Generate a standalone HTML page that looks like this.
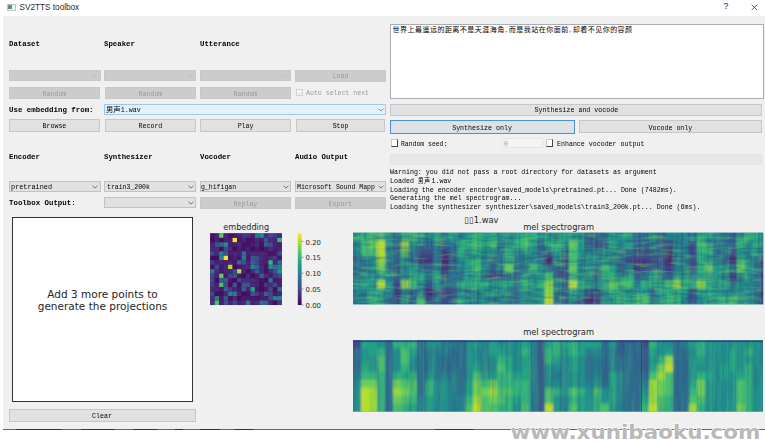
<!DOCTYPE html>
<html><head><meta charset="utf-8"><title>SV2TTS toolbox</title>
<style>
html,body{margin:0;padding:0;background:#fff;}
body{width:765px;height:442px;position:relative;overflow:hidden;font-family:"Liberation Mono","Noto Serif CJK SC",monospace;}
.abs{position:absolute;}
div{position:absolute;box-sizing:border-box;}
.t{white-space:pre;font-size:8px;line-height:10px;height:10px;}
.r{font-family:"Liberation Mono","Noto Sans CJK SC",monospace;font-weight:400;}
.b{font-family:"Liberation Mono","Noto Serif CJK SC",monospace;font-weight:700;}
.win{background:#f0f0f0;}
.btn{background:#e1e1e1;border:1px solid #c6c6c6;}
.dis{background:#cccccc;border:1px solid #c8c8c8;}
.cmb{background:#e1e1e1;border:1px solid #c2c2c2;}
.foc{background:#e1e1e1;border:1.3px solid #4b93d6;box-shadow:inset 0 0 0 1.2px #cfe3f6;}
.hov{background:#e5f1fb;border:1px solid #9ccaf0;}
.ta{background:#fff;border:1px solid #a9adb3;}
.cv{background:#fff;border:1px solid #333;}
.cb{background:#fff;border:1px solid #444;border-left-color:#c8c8c8;border-top-color:#c8c8c8;}
.cbd{background:#f7f7f7;border:1px solid #d0d0d0;}
.pb{background:#e6e6e6;}
.sd{background:#f4f4f4;border:1px solid #e5e5e5;}
.cm{display:inline-block;width:4.2px;text-align:left;padding-left:0.6px;box-sizing:border-box}
.dv{font-family:"DejaVu Sans",sans-serif;white-space:pre;}
</style></head><body>

<div class="win" style="left:3.00px;top:16.40px;width:762.00px;height:412.40px;"></div>
<div style="left:3px;top:428.8px;width:762px;height:1.1px;background:#666"></div>
<div style="left:16px;top:428.9px;width:46px;height:1.1px;background:#2c3442"></div>
<div style="left:81px;top:428.9px;width:34px;height:1.1px;background:#2e3a34"></div>
<div style="left:133px;top:428.9px;width:24px;height:1.1px;background:#43302e"></div>
<div style="left:175px;top:428.9px;width:8px;height:1.1px;background:#333"></div>
<div style="left:200px;top:428.9px;width:20px;height:1.1px;background:#333"></div>
<div style="left:235px;top:428.9px;width:18px;height:1.1px;background:#2f3a33"></div>
<div style="left:435px;top:428.9px;width:39px;height:1.1px;background:#383838"></div>
<div style="left:7px;top:3.6px;width:9.4px;height:7px;background:#eef3f1;border:0.6px solid #b8c8c2"></div>
<div style="left:7.8px;top:4.6px;width:4.4px;height:4.6px;background:#5f9080"></div>
<div class="abs" style="left:19.6px;top:1.6px;font:8.2px/11px 'Liberation Sans',sans-serif;color:#2a2a2a;white-space:pre" id="title">SV2TTS toolbox</div>
<div class="abs" style="left:723.4px;top:1.4px;font:8.8px/11px 'Liberation Sans',sans-serif;color:#222">?</div>
<svg class="abs" style="left:751.4px;top:3.6px" width="7" height="7" viewBox="0 0 7 7"><path d="M0.6 0.6 L6.2 6.2 M6.2 0.6 L0.6 6.2" stroke="#222" stroke-width="0.7" fill="none"/></svg>
<div class="t b " style="left:9.00px;top:39.20px;transform:scaleX(0.9208);transform-origin:0 50%;color:#000">Dataset</div>
<div class="t b " style="left:104.20px;top:39.20px;transform:scaleX(0.9208);transform-origin:0 50%;color:#000">Speaker</div>
<div class="t b " style="left:199.60px;top:39.20px;transform:scaleX(0.9208);transform-origin:0 50%;color:#000">Utterance</div>
<div class="dis" style="left:9.00px;top:70.00px;width:91.60px;height:10.80px;"></div>
<svg class="abs" style="left:91.80px;top:73.60px" width="6" height="4" viewBox="0 0 6 4"><path d="M0.6 0.7 L3 3.1 L5.4 0.7" fill="none" stroke="#bcbcbc" stroke-width="0.8"/></svg>
<div class="dis" style="left:104.20px;top:70.00px;width:91.80px;height:10.80px;"></div>
<svg class="abs" style="left:187.20px;top:73.60px" width="6" height="4" viewBox="0 0 6 4"><path d="M0.6 0.7 L3 3.1 L5.4 0.7" fill="none" stroke="#bcbcbc" stroke-width="0.8"/></svg>
<div class="dis" style="left:199.60px;top:70.00px;width:91.40px;height:10.80px;"></div>
<svg class="abs" style="left:282.20px;top:73.60px" width="6" height="4" viewBox="0 0 6 4"><path d="M0.6 0.7 L3 3.1 L5.4 0.7" fill="none" stroke="#bcbcbc" stroke-width="0.8"/></svg>
<div class="dis" style="left:295.20px;top:69.60px;width:90.60px;height:12.00px;"></div>
<div class="t r " style="left:330.90px;top:71.10px;transform:scaleX(0.8292);transform-origin:50% 50%;color:#9a9a9a">Load</div>
<div class="dis" style="left:9.40px;top:87.00px;width:90.80px;height:12.40px;"></div>
<div class="t r " style="left:40.40px;top:88.70px;transform:scaleX(0.8292);transform-origin:50% 50%;color:#9a9a9a">Random</div>
<div class="dis" style="left:104.60px;top:87.00px;width:91.00px;height:12.40px;"></div>
<div class="t r " style="left:135.70px;top:88.70px;transform:scaleX(0.8292);transform-origin:50% 50%;color:#9a9a9a">Random</div>
<div class="dis" style="left:200.00px;top:87.00px;width:90.60px;height:12.40px;"></div>
<div class="t r " style="left:230.90px;top:88.70px;transform:scaleX(0.8292);transform-origin:50% 50%;color:#9a9a9a">Random</div>
<div class="cbd" style="left:295.80px;top:89.00px;width:6.80px;height:7.40px;"></div>
<svg class="abs" style="left:296.6px;top:90px" width="6" height="6" viewBox="0 0 6 6"><path d="M0.8 3 L2.3 4.6 L5.2 1" stroke="#d8d8d8" stroke-width="0.9" fill="none"/></svg>
<div class="t r " style="left:306.00px;top:88.20px;transform:scaleX(0.8208);transform-origin:0 50%;color:#9a9a9a">Auto select next</div>
<div class="t b " style="left:9.00px;top:104.70px;transform:scaleX(0.9271);transform-origin:0 50%;color:#000">Use embedding from:</div>
<div class="hov" style="left:104.20px;top:104.20px;width:281.60px;height:10.60px;"></div>
<svg class="abs" style="left:378.00px;top:107.60px" width="6" height="4" viewBox="0 0 6 4"><path d="M0.6 0.7 L3 3.1 L5.4 0.7" fill="none" stroke="#5a7fa0" stroke-width="0.8"/></svg>
<div class="t r" style="left:106.4px;top:104.6px;color:#000;transform:scaleX(0.83);transform-origin:0 50%"><span style="font-size:7px;letter-spacing:0px;display:inline-block;transform:scaleX(1.26);transform-origin:0 50%;margin-right:3.8px">男声</span>1.wav</div>
<div class="btn" style="left:9.40px;top:118.70px;width:90.90px;height:12.90px;"></div>
<div class="t r " style="left:40.40px;top:120.70px;transform:scaleX(0.8292);transform-origin:50% 50%;color:#000">Browse</div>
<div class="btn" style="left:104.60px;top:118.70px;width:91.10px;height:12.90px;"></div>
<div class="t r " style="left:135.70px;top:120.70px;transform:scaleX(0.8292);transform-origin:50% 50%;color:#000">Record</div>
<div class="btn" style="left:200.00px;top:118.70px;width:90.70px;height:12.90px;"></div>
<div class="t r " style="left:235.70px;top:120.70px;transform:scaleX(0.8292);transform-origin:50% 50%;color:#000">Play</div>
<div class="btn" style="left:295.60px;top:118.70px;width:89.90px;height:12.90px;"></div>
<div class="t r " style="left:330.90px;top:120.70px;transform:scaleX(0.8292);transform-origin:50% 50%;color:#000">Stop</div>
<div class="t b " style="left:9.00px;top:152.30px;transform:scaleX(0.9208);transform-origin:0 50%;color:#000">Encoder</div>
<div class="t b " style="left:104.20px;top:152.30px;transform:scaleX(0.9208);transform-origin:0 50%;color:#000">Synthesizer</div>
<div class="t b " style="left:199.60px;top:152.30px;transform:scaleX(0.9208);transform-origin:0 50%;color:#000">Vocoder</div>
<div class="t b " style="left:295.20px;top:152.30px;transform:scaleX(0.9208);transform-origin:0 50%;color:#000">Audio Output</div>
<div class="cmb" style="left:9.00px;top:181.00px;width:91.60px;height:11.40px;"></div>
<div class="t r " style="left:10.60px;top:182.40px;transform:scaleX(0.8542);transform-origin:0 50%;color:#000">pretrained</div>
<svg class="abs" style="left:92.40px;top:185.20px" width="6" height="4" viewBox="0 0 6 4"><path d="M0.6 0.7 L3 3.1 L5.4 0.7" fill="none" stroke="#555" stroke-width="0.8"/></svg>
<div class="cmb" style="left:104.20px;top:181.00px;width:91.80px;height:11.40px;"></div>
<div class="t r " style="left:107.40px;top:182.40px;transform:scaleX(0.8125);transform-origin:0 50%;color:#000">train3_200k</div>
<svg class="abs" style="left:187.80px;top:185.20px" width="6" height="4" viewBox="0 0 6 4"><path d="M0.6 0.7 L3 3.1 L5.4 0.7" fill="none" stroke="#555" stroke-width="0.8"/></svg>
<div class="cmb" style="left:199.60px;top:181.00px;width:91.40px;height:11.40px;"></div>
<div class="t r " style="left:201.20px;top:182.40px;transform:scaleX(0.8125);transform-origin:0 50%;color:#000">g_hifigan</div>
<svg class="abs" style="left:282.80px;top:185.20px" width="6" height="4" viewBox="0 0 6 4"><path d="M0.6 0.7 L3 3.1 L5.4 0.7" fill="none" stroke="#555" stroke-width="0.8"/></svg>
<div class="cmb" style="left:295.20px;top:181.00px;width:90.60px;height:11.40px;"></div>
<div class="t r " style="left:296.80px;top:182.40px;transform:scaleX(0.8104);transform-origin:0 50%;color:#000">Microsoft Sound Mapp</div>
<svg class="abs" style="left:377.60px;top:185.20px" width="6" height="4" viewBox="0 0 6 4"><path d="M0.6 0.7 L3 3.1 L5.4 0.7" fill="none" stroke="#555" stroke-width="0.8"/></svg>
<div class="t b " style="left:9.00px;top:197.70px;transform:scaleX(0.9250);transform-origin:0 50%;color:#000">Toolbox Output:</div>
<div class="cmb" style="left:104.20px;top:197.40px;width:91.80px;height:10.60px;"></div>
<svg class="abs" style="left:187.80px;top:200.80px" width="6" height="4" viewBox="0 0 6 4"><path d="M0.6 0.7 L3 3.1 L5.4 0.7" fill="none" stroke="#555" stroke-width="0.8"/></svg>
<div class="dis" style="left:200.00px;top:197.00px;width:90.60px;height:12.00px;"></div>
<div class="t r " style="left:230.90px;top:198.50px;transform:scaleX(0.8292);transform-origin:50% 50%;color:#9a9a9a">Replay</div>
<div class="dis" style="left:295.20px;top:197.00px;width:90.60px;height:12.00px;"></div>
<div class="t r " style="left:326.10px;top:198.50px;transform:scaleX(0.8292);transform-origin:50% 50%;color:#9a9a9a">Export</div>
<div class="cv" style="left:12.00px;top:217.00px;width:180.80px;height:184.80px;"></div>
<div class="dv" style="left:12px;top:287.9px;width:181px;text-align:center;font-size:10.53px;line-height:12px;color:#262626" id="proj">Add 3 more points to
generate the projections</div>
<div class="btn" style="left:9.00px;top:409.00px;width:186.60px;height:13.00px;"></div>
<div class="t r " style="left:89.80px;top:411.20px;transform:scaleX(0.8292);transform-origin:50% 50%;color:#000">Clear</div>
<div class="ta" style="left:389.60px;top:23.60px;width:374.00px;height:75.00px;"></div>
<div class="abs" id="zh" style="left:392.6px;top:24.9px;letter-spacing:0.47px;font-family:'Liberation Serif','Noto Sans CJK SC',sans-serif;font-size:7px;line-height:10px;white-space:pre;color:#000">世界上最遥远的距离不是天涯海角<span class="cm">,</span>而是我站在你面前<span class="cm">,</span>却看不见你的容颜</div>
<div class="btn" style="left:390.00px;top:103.60px;width:372.40px;height:12.00px;"></div>
<div class="t r " style="left:525.80px;top:105.30px;transform:scaleX(0.8292);transform-origin:50% 50%;color:#000">Synthesize and vocode</div>
<div class="foc" style="left:390.00px;top:120.20px;width:184.60px;height:13.40px;"></div>
<div class="t r " style="left:446.20px;top:122.60px;transform:scaleX(0.8292);transform-origin:50% 50%;color:#000">Synthesize only</div>
<div class="btn" style="left:579.00px;top:120.40px;width:183.40px;height:13.00px;"></div>
<div class="t r " style="left:644.40px;top:122.60px;transform:scaleX(0.8292);transform-origin:50% 50%;color:#000">Vocode only</div>
<div class="cb" style="left:390.80px;top:139.30px;width:6.80px;height:8.00px;"></div>
<div class="t r " style="left:401.00px;top:139.20px;transform:scaleX(0.8042);transform-origin:0 50%;color:#000">Random seed:</div>
<div class="sd" style="left:502.00px;top:138.00px;width:41.40px;height:10.00px;"></div>
<div class="t r " style="left:504.20px;top:139.20px;transform:scaleX(0.8292);transform-origin:0 50%;color:#9a9a9a">0</div>
<div class="cb" style="left:546.00px;top:139.30px;width:7.40px;height:8.00px;"></div>
<div class="t r " style="left:556.60px;top:139.20px;transform:scaleX(0.8271);transform-origin:0 50%;color:#000">Enhance vocoder output</div>
<div class="pb" style="left:390.00px;top:153.60px;width:372.40px;height:11.00px;"></div>
<div class="t r " style="left:389.80px;top:167.20px;transform:scaleX(0.8292);transform-origin:0 50%;color:#000">Warning: you did not pass a root directory for datasets as argument</div>
<div class="t r" style="left:389.8px;top:175.70px;color:#000;transform:scaleX(0.83);transform-origin:0 50%">Loaded <span style="font-size:7px;letter-spacing:0.7px;margin-right:0.9px">男声</span>1.wav</div>
<div class="t r " style="left:389.80px;top:184.50px;transform:scaleX(0.8292);transform-origin:0 50%;color:#000">Loading the encoder encoder\saved_models\pretrained.pt... Done (7482ms).</div>
<div class="t r " style="left:389.80px;top:192.80px;transform:scaleX(0.8292);transform-origin:0 50%;color:#000">Generating the mel spectrogram...</div>
<div class="t r " style="left:389.80px;top:201.50px;transform:scaleX(0.8292);transform-origin:0 50%;color:#000">Loading the synthesizer synthesizer\saved_models\train3_200k.pt... Done (6ms).</div>
<svg class="abs" style="left:0;top:0" width="765" height="442" viewBox="0 0 765 442">
<rect x="210.2" y="233.4" width="71.6" height="71.6" fill="#450c5e"/>
<rect x="210.20" y="233.40" width="4.52" height="4.52" fill="#461465"/>
<rect x="214.67" y="233.40" width="4.52" height="4.52" fill="#482677"/>
<rect x="219.15" y="233.40" width="4.52" height="4.52" fill="#62c95f"/>
<rect x="223.62" y="233.40" width="4.52" height="4.52" fill="#482677"/>
<rect x="228.10" y="233.40" width="4.52" height="4.52" fill="#461465"/>
<rect x="232.57" y="233.40" width="4.52" height="4.52" fill="#471a6b"/>
<rect x="237.05" y="233.40" width="4.52" height="4.52" fill="#482677"/>
<rect x="241.52" y="233.40" width="4.52" height="4.52" fill="#423c82"/>
<rect x="246.00" y="233.40" width="4.52" height="4.52" fill="#423c82"/>
<rect x="250.47" y="233.40" width="4.52" height="4.52" fill="#472071"/>
<rect x="254.95" y="233.40" width="4.52" height="4.52" fill="#2a788e"/>
<rect x="259.42" y="233.40" width="4.52" height="4.52" fill="#238d8c"/>
<rect x="263.90" y="233.40" width="4.52" height="4.52" fill="#472c7a"/>
<rect x="268.38" y="233.40" width="4.52" height="4.52" fill="#3e4a89"/>
<rect x="272.85" y="233.40" width="4.52" height="4.52" fill="#423c82"/>
<rect x="277.32" y="233.40" width="4.52" height="4.52" fill="#482677"/>
<rect x="210.20" y="237.88" width="4.52" height="4.52" fill="#450d60"/>
<rect x="214.67" y="237.88" width="4.52" height="4.52" fill="#482677"/>
<rect x="219.15" y="237.88" width="4.52" height="4.52" fill="#450d60"/>
<rect x="223.62" y="237.88" width="4.52" height="4.52" fill="#472071"/>
<rect x="228.10" y="237.88" width="4.52" height="4.52" fill="#472071"/>
<rect x="232.57" y="237.88" width="4.52" height="4.52" fill="#eee526"/>
<rect x="237.05" y="237.88" width="4.52" height="4.52" fill="#471a6b"/>
<rect x="241.52" y="237.88" width="4.52" height="4.52" fill="#482677"/>
<rect x="246.00" y="237.88" width="4.52" height="4.52" fill="#461465"/>
<rect x="250.47" y="237.88" width="4.52" height="4.52" fill="#461465"/>
<rect x="254.95" y="237.88" width="4.52" height="4.52" fill="#472c7a"/>
<rect x="259.42" y="237.88" width="4.52" height="4.52" fill="#472071"/>
<rect x="263.90" y="237.88" width="4.52" height="4.52" fill="#39568b"/>
<rect x="268.38" y="237.88" width="4.52" height="4.52" fill="#462f7b"/>
<rect x="272.85" y="237.88" width="4.52" height="4.52" fill="#482677"/>
<rect x="277.32" y="237.88" width="4.52" height="4.52" fill="#35b779"/>
<rect x="210.20" y="242.35" width="4.52" height="4.52" fill="#482677"/>
<rect x="214.67" y="242.35" width="4.52" height="4.52" fill="#39568b"/>
<rect x="219.15" y="242.35" width="4.52" height="4.52" fill="#2f6d8e"/>
<rect x="223.62" y="242.35" width="4.52" height="4.52" fill="#238d8c"/>
<rect x="228.10" y="242.35" width="4.52" height="4.52" fill="#472071"/>
<rect x="232.57" y="242.35" width="4.52" height="4.52" fill="#472071"/>
<rect x="237.05" y="242.35" width="4.52" height="4.52" fill="#472c7a"/>
<rect x="241.52" y="242.35" width="4.52" height="4.52" fill="#461465"/>
<rect x="246.00" y="242.35" width="4.52" height="4.52" fill="#461465"/>
<rect x="250.47" y="242.35" width="4.52" height="4.52" fill="#472071"/>
<rect x="254.95" y="242.35" width="4.52" height="4.52" fill="#472c7a"/>
<rect x="259.42" y="242.35" width="4.52" height="4.52" fill="#461465"/>
<rect x="263.90" y="242.35" width="4.52" height="4.52" fill="#34628d"/>
<rect x="268.38" y="242.35" width="4.52" height="4.52" fill="#39568b"/>
<rect x="272.85" y="242.35" width="4.52" height="4.52" fill="#482677"/>
<rect x="277.32" y="242.35" width="4.52" height="4.52" fill="#472071"/>
<rect x="210.20" y="246.83" width="4.52" height="4.52" fill="#472c7a"/>
<rect x="214.67" y="246.83" width="4.52" height="4.52" fill="#462f7b"/>
<rect x="219.15" y="246.83" width="4.52" height="4.52" fill="#450d60"/>
<rect x="223.62" y="246.83" width="4.52" height="4.52" fill="#3e4a89"/>
<rect x="228.10" y="246.83" width="4.52" height="4.52" fill="#472c7a"/>
<rect x="232.57" y="246.83" width="4.52" height="4.52" fill="#450d60"/>
<rect x="237.05" y="246.83" width="4.52" height="4.52" fill="#472071"/>
<rect x="241.52" y="246.83" width="4.52" height="4.52" fill="#461465"/>
<rect x="246.00" y="246.83" width="4.52" height="4.52" fill="#482677"/>
<rect x="250.47" y="246.83" width="4.52" height="4.52" fill="#450d60"/>
<rect x="254.95" y="246.83" width="4.52" height="4.52" fill="#471a6b"/>
<rect x="259.42" y="246.83" width="4.52" height="4.52" fill="#450d60"/>
<rect x="263.90" y="246.83" width="4.52" height="4.52" fill="#471a6b"/>
<rect x="268.38" y="246.83" width="4.52" height="4.52" fill="#462f7b"/>
<rect x="272.85" y="246.83" width="4.52" height="4.52" fill="#472071"/>
<rect x="277.32" y="246.83" width="4.52" height="4.52" fill="#482677"/>
<rect x="210.20" y="251.30" width="4.52" height="4.52" fill="#3e4a89"/>
<rect x="214.67" y="251.30" width="4.52" height="4.52" fill="#472c7a"/>
<rect x="219.15" y="251.30" width="4.52" height="4.52" fill="#26828e"/>
<rect x="223.62" y="251.30" width="4.52" height="4.52" fill="#39568b"/>
<rect x="228.10" y="251.30" width="4.52" height="4.52" fill="#472071"/>
<rect x="232.57" y="251.30" width="4.52" height="4.52" fill="#472c7a"/>
<rect x="237.05" y="251.30" width="4.52" height="4.52" fill="#472071"/>
<rect x="241.52" y="251.30" width="4.52" height="4.52" fill="#2f6d8e"/>
<rect x="246.00" y="251.30" width="4.52" height="4.52" fill="#472071"/>
<rect x="250.47" y="251.30" width="4.52" height="4.52" fill="#472c7a"/>
<rect x="254.95" y="251.30" width="4.52" height="4.52" fill="#482677"/>
<rect x="259.42" y="251.30" width="4.52" height="4.52" fill="#462f7b"/>
<rect x="263.90" y="251.30" width="4.52" height="4.52" fill="#472071"/>
<rect x="268.38" y="251.30" width="4.52" height="4.52" fill="#461465"/>
<rect x="272.85" y="251.30" width="4.52" height="4.52" fill="#471a6b"/>
<rect x="277.32" y="251.30" width="4.52" height="4.52" fill="#3e4a89"/>
<rect x="210.20" y="255.78" width="4.52" height="4.52" fill="#450d60"/>
<rect x="214.67" y="255.78" width="4.52" height="4.52" fill="#450d60"/>
<rect x="219.15" y="255.78" width="4.52" height="4.52" fill="#26828e"/>
<rect x="223.62" y="255.78" width="4.52" height="4.52" fill="#eee526"/>
<rect x="228.10" y="255.78" width="4.52" height="4.52" fill="#461465"/>
<rect x="232.57" y="255.78" width="4.52" height="4.52" fill="#472071"/>
<rect x="237.05" y="255.78" width="4.52" height="4.52" fill="#461465"/>
<rect x="241.52" y="255.78" width="4.52" height="4.52" fill="#2a788e"/>
<rect x="246.00" y="255.78" width="4.52" height="4.52" fill="#471a6b"/>
<rect x="250.47" y="255.78" width="4.52" height="4.52" fill="#39568b"/>
<rect x="254.95" y="255.78" width="4.52" height="4.52" fill="#3e4a89"/>
<rect x="259.42" y="255.78" width="4.52" height="4.52" fill="#472c7a"/>
<rect x="263.90" y="255.78" width="4.52" height="4.52" fill="#472071"/>
<rect x="268.38" y="255.78" width="4.52" height="4.52" fill="#472c7a"/>
<rect x="272.85" y="255.78" width="4.52" height="4.52" fill="#423c82"/>
<rect x="277.32" y="255.78" width="4.52" height="4.52" fill="#471a6b"/>
<rect x="210.20" y="260.25" width="4.52" height="4.52" fill="#423c82"/>
<rect x="214.67" y="260.25" width="4.52" height="4.52" fill="#472071"/>
<rect x="219.15" y="260.25" width="4.52" height="4.52" fill="#482677"/>
<rect x="223.62" y="260.25" width="4.52" height="4.52" fill="#472071"/>
<rect x="228.10" y="260.25" width="4.52" height="4.52" fill="#482677"/>
<rect x="232.57" y="260.25" width="4.52" height="4.52" fill="#471a6b"/>
<rect x="237.05" y="260.25" width="4.52" height="4.52" fill="#2f6d8e"/>
<rect x="241.52" y="260.25" width="4.52" height="4.52" fill="#39568b"/>
<rect x="246.00" y="260.25" width="4.52" height="4.52" fill="#482677"/>
<rect x="250.47" y="260.25" width="4.52" height="4.52" fill="#34628d"/>
<rect x="254.95" y="260.25" width="4.52" height="4.52" fill="#3e4a89"/>
<rect x="259.42" y="260.25" width="4.52" height="4.52" fill="#482677"/>
<rect x="263.90" y="260.25" width="4.52" height="4.52" fill="#472071"/>
<rect x="268.38" y="260.25" width="4.52" height="4.52" fill="#35b779"/>
<rect x="272.85" y="260.25" width="4.52" height="4.52" fill="#482677"/>
<rect x="277.32" y="260.25" width="4.52" height="4.52" fill="#2f6d8e"/>
<rect x="210.20" y="264.73" width="4.52" height="4.52" fill="#461465"/>
<rect x="214.67" y="264.73" width="4.52" height="4.52" fill="#3e4a89"/>
<rect x="219.15" y="264.73" width="4.52" height="4.52" fill="#471a6b"/>
<rect x="223.62" y="264.73" width="4.52" height="4.52" fill="#472c7a"/>
<rect x="228.10" y="264.73" width="4.52" height="4.52" fill="#b4de2c"/>
<rect x="232.57" y="264.73" width="4.52" height="4.52" fill="#450d60"/>
<rect x="237.05" y="264.73" width="4.52" height="4.52" fill="#471a6b"/>
<rect x="241.52" y="264.73" width="4.52" height="4.52" fill="#482677"/>
<rect x="246.00" y="264.73" width="4.52" height="4.52" fill="#472c7a"/>
<rect x="250.47" y="264.73" width="4.52" height="4.52" fill="#26828e"/>
<rect x="254.95" y="264.73" width="4.52" height="4.52" fill="#34628d"/>
<rect x="259.42" y="264.73" width="4.52" height="4.52" fill="#472c7a"/>
<rect x="263.90" y="264.73" width="4.52" height="4.52" fill="#461465"/>
<rect x="268.38" y="264.73" width="4.52" height="4.52" fill="#238d8c"/>
<rect x="272.85" y="264.73" width="4.52" height="4.52" fill="#2a788e"/>
<rect x="277.32" y="264.73" width="4.52" height="4.52" fill="#26828e"/>
<rect x="210.20" y="269.20" width="4.52" height="4.52" fill="#2a788e"/>
<rect x="214.67" y="269.20" width="4.52" height="4.52" fill="#472c7a"/>
<rect x="219.15" y="269.20" width="4.52" height="4.52" fill="#471a6b"/>
<rect x="223.62" y="269.20" width="4.52" height="4.52" fill="#482677"/>
<rect x="228.10" y="269.20" width="4.52" height="4.52" fill="#482677"/>
<rect x="232.57" y="269.20" width="4.52" height="4.52" fill="#3e4a89"/>
<rect x="237.05" y="269.20" width="4.52" height="4.52" fill="#b4de2c"/>
<rect x="241.52" y="269.20" width="4.52" height="4.52" fill="#482677"/>
<rect x="246.00" y="269.20" width="4.52" height="4.52" fill="#450d60"/>
<rect x="250.47" y="269.20" width="4.52" height="4.52" fill="#472c7a"/>
<rect x="254.95" y="269.20" width="4.52" height="4.52" fill="#34628d"/>
<rect x="259.42" y="269.20" width="4.52" height="4.52" fill="#472c7a"/>
<rect x="263.90" y="269.20" width="4.52" height="4.52" fill="#461465"/>
<rect x="268.38" y="269.20" width="4.52" height="4.52" fill="#472c7a"/>
<rect x="272.85" y="269.20" width="4.52" height="4.52" fill="#39568b"/>
<rect x="277.32" y="269.20" width="4.52" height="4.52" fill="#20988a"/>
<rect x="210.20" y="273.68" width="4.52" height="4.52" fill="#3e4a89"/>
<rect x="214.67" y="273.68" width="4.52" height="4.52" fill="#482677"/>
<rect x="219.15" y="273.68" width="4.52" height="4.52" fill="#62c95f"/>
<rect x="223.62" y="273.68" width="4.52" height="4.52" fill="#471a6b"/>
<rect x="228.10" y="273.68" width="4.52" height="4.52" fill="#3e4a89"/>
<rect x="232.57" y="273.68" width="4.52" height="4.52" fill="#39568b"/>
<rect x="237.05" y="273.68" width="4.52" height="4.52" fill="#471a6b"/>
<rect x="241.52" y="273.68" width="4.52" height="4.52" fill="#450d60"/>
<rect x="246.00" y="273.68" width="4.52" height="4.52" fill="#462f7b"/>
<rect x="250.47" y="273.68" width="4.52" height="4.52" fill="#450d60"/>
<rect x="254.95" y="273.68" width="4.52" height="4.52" fill="#472071"/>
<rect x="259.42" y="273.68" width="4.52" height="4.52" fill="#34628d"/>
<rect x="263.90" y="273.68" width="4.52" height="4.52" fill="#472c7a"/>
<rect x="268.38" y="273.68" width="4.52" height="4.52" fill="#472071"/>
<rect x="272.85" y="273.68" width="4.52" height="4.52" fill="#423c82"/>
<rect x="277.32" y="273.68" width="4.52" height="4.52" fill="#3e4a89"/>
<rect x="210.20" y="278.15" width="4.52" height="4.52" fill="#3e4a89"/>
<rect x="214.67" y="278.15" width="4.52" height="4.52" fill="#450d60"/>
<rect x="219.15" y="278.15" width="4.52" height="4.52" fill="#34628d"/>
<rect x="223.62" y="278.15" width="4.52" height="4.52" fill="#34628d"/>
<rect x="228.10" y="278.15" width="4.52" height="4.52" fill="#471a6b"/>
<rect x="232.57" y="278.15" width="4.52" height="4.52" fill="#450d60"/>
<rect x="237.05" y="278.15" width="4.52" height="4.52" fill="#3e4a89"/>
<rect x="241.52" y="278.15" width="4.52" height="4.52" fill="#462f7b"/>
<rect x="246.00" y="278.15" width="4.52" height="4.52" fill="#462f7b"/>
<rect x="250.47" y="278.15" width="4.52" height="4.52" fill="#462f7b"/>
<rect x="254.95" y="278.15" width="4.52" height="4.52" fill="#472071"/>
<rect x="259.42" y="278.15" width="4.52" height="4.52" fill="#461465"/>
<rect x="263.90" y="278.15" width="4.52" height="4.52" fill="#450d60"/>
<rect x="268.38" y="278.15" width="4.52" height="4.52" fill="#2a788e"/>
<rect x="272.85" y="278.15" width="4.52" height="4.52" fill="#471a6b"/>
<rect x="277.32" y="278.15" width="4.52" height="4.52" fill="#472071"/>
<rect x="210.20" y="282.62" width="4.52" height="4.52" fill="#423c82"/>
<rect x="214.67" y="282.62" width="4.52" height="4.52" fill="#472071"/>
<rect x="219.15" y="282.62" width="4.52" height="4.52" fill="#4bc06c"/>
<rect x="223.62" y="282.62" width="4.52" height="4.52" fill="#3e4a89"/>
<rect x="228.10" y="282.62" width="4.52" height="4.52" fill="#450d60"/>
<rect x="232.57" y="282.62" width="4.52" height="4.52" fill="#39568b"/>
<rect x="237.05" y="282.62" width="4.52" height="4.52" fill="#450d60"/>
<rect x="241.52" y="282.62" width="4.52" height="4.52" fill="#39568b"/>
<rect x="246.00" y="282.62" width="4.52" height="4.52" fill="#39568b"/>
<rect x="250.47" y="282.62" width="4.52" height="4.52" fill="#482677"/>
<rect x="254.95" y="282.62" width="4.52" height="4.52" fill="#482677"/>
<rect x="259.42" y="282.62" width="4.52" height="4.52" fill="#450d60"/>
<rect x="263.90" y="282.62" width="4.52" height="4.52" fill="#423c82"/>
<rect x="268.38" y="282.62" width="4.52" height="4.52" fill="#462f7b"/>
<rect x="272.85" y="282.62" width="4.52" height="4.52" fill="#3e4a89"/>
<rect x="277.32" y="282.62" width="4.52" height="4.52" fill="#472071"/>
<rect x="210.20" y="287.10" width="4.52" height="4.52" fill="#472c7a"/>
<rect x="214.67" y="287.10" width="4.52" height="4.52" fill="#482677"/>
<rect x="219.15" y="287.10" width="4.52" height="4.52" fill="#471a6b"/>
<rect x="223.62" y="287.10" width="4.52" height="4.52" fill="#34628d"/>
<rect x="228.10" y="287.10" width="4.52" height="4.52" fill="#423c82"/>
<rect x="232.57" y="287.10" width="4.52" height="4.52" fill="#482677"/>
<rect x="237.05" y="287.10" width="4.52" height="4.52" fill="#471a6b"/>
<rect x="241.52" y="287.10" width="4.52" height="4.52" fill="#34628d"/>
<rect x="246.00" y="287.10" width="4.52" height="4.52" fill="#482677"/>
<rect x="250.47" y="287.10" width="4.52" height="4.52" fill="#23a386"/>
<rect x="254.95" y="287.10" width="4.52" height="4.52" fill="#461465"/>
<rect x="259.42" y="287.10" width="4.52" height="4.52" fill="#450d60"/>
<rect x="263.90" y="287.10" width="4.52" height="4.52" fill="#471a6b"/>
<rect x="268.38" y="287.10" width="4.52" height="4.52" fill="#3e4a89"/>
<rect x="272.85" y="287.10" width="4.52" height="4.52" fill="#450d60"/>
<rect x="277.32" y="287.10" width="4.52" height="4.52" fill="#2f6d8e"/>
<rect x="210.20" y="291.57" width="4.52" height="4.52" fill="#3e4a89"/>
<rect x="214.67" y="291.57" width="4.52" height="4.52" fill="#450d60"/>
<rect x="219.15" y="291.57" width="4.52" height="4.52" fill="#450d60"/>
<rect x="223.62" y="291.57" width="4.52" height="4.52" fill="#482677"/>
<rect x="228.10" y="291.57" width="4.52" height="4.52" fill="#26828e"/>
<rect x="232.57" y="291.57" width="4.52" height="4.52" fill="#2a788e"/>
<rect x="237.05" y="291.57" width="4.52" height="4.52" fill="#482677"/>
<rect x="241.52" y="291.57" width="4.52" height="4.52" fill="#450d60"/>
<rect x="246.00" y="291.57" width="4.52" height="4.52" fill="#461465"/>
<rect x="250.47" y="291.57" width="4.52" height="4.52" fill="#39568b"/>
<rect x="254.95" y="291.57" width="4.52" height="4.52" fill="#423c82"/>
<rect x="259.42" y="291.57" width="4.52" height="4.52" fill="#472071"/>
<rect x="263.90" y="291.57" width="4.52" height="4.52" fill="#34628d"/>
<rect x="268.38" y="291.57" width="4.52" height="4.52" fill="#3e4a89"/>
<rect x="272.85" y="291.57" width="4.52" height="4.52" fill="#471a6b"/>
<rect x="277.32" y="291.57" width="4.52" height="4.52" fill="#482677"/>
<rect x="210.20" y="296.05" width="4.52" height="4.52" fill="#462f7b"/>
<rect x="214.67" y="296.05" width="4.52" height="4.52" fill="#2a788e"/>
<rect x="219.15" y="296.05" width="4.52" height="4.52" fill="#471a6b"/>
<rect x="223.62" y="296.05" width="4.52" height="4.52" fill="#39568b"/>
<rect x="228.10" y="296.05" width="4.52" height="4.52" fill="#461465"/>
<rect x="232.57" y="296.05" width="4.52" height="4.52" fill="#472c7a"/>
<rect x="237.05" y="296.05" width="4.52" height="4.52" fill="#450d60"/>
<rect x="241.52" y="296.05" width="4.52" height="4.52" fill="#471a6b"/>
<rect x="246.00" y="296.05" width="4.52" height="4.52" fill="#471a6b"/>
<rect x="250.47" y="296.05" width="4.52" height="4.52" fill="#471a6b"/>
<rect x="254.95" y="296.05" width="4.52" height="4.52" fill="#461465"/>
<rect x="259.42" y="296.05" width="4.52" height="4.52" fill="#472071"/>
<rect x="263.90" y="296.05" width="4.52" height="4.52" fill="#472071"/>
<rect x="268.38" y="296.05" width="4.52" height="4.52" fill="#3e4a89"/>
<rect x="272.85" y="296.05" width="4.52" height="4.52" fill="#26828e"/>
<rect x="277.32" y="296.05" width="4.52" height="4.52" fill="#26828e"/>
<rect x="210.20" y="300.52" width="4.52" height="4.52" fill="#462f7b"/>
<rect x="214.67" y="300.52" width="4.52" height="4.52" fill="#4bc06c"/>
<rect x="219.15" y="300.52" width="4.52" height="4.52" fill="#472071"/>
<rect x="223.62" y="300.52" width="4.52" height="4.52" fill="#39568b"/>
<rect x="228.10" y="300.52" width="4.52" height="4.52" fill="#482677"/>
<rect x="232.57" y="300.52" width="4.52" height="4.52" fill="#3e4a89"/>
<rect x="237.05" y="300.52" width="4.52" height="4.52" fill="#472071"/>
<rect x="241.52" y="300.52" width="4.52" height="4.52" fill="#472c7a"/>
<rect x="246.00" y="300.52" width="4.52" height="4.52" fill="#2a788e"/>
<rect x="250.47" y="300.52" width="4.52" height="4.52" fill="#482677"/>
<rect x="254.95" y="300.52" width="4.52" height="4.52" fill="#472c7a"/>
<rect x="259.42" y="300.52" width="4.52" height="4.52" fill="#2f6d8e"/>
<rect x="263.90" y="300.52" width="4.52" height="4.52" fill="#34628d"/>
<rect x="268.38" y="300.52" width="4.52" height="4.52" fill="#482677"/>
<rect x="272.85" y="300.52" width="4.52" height="4.52" fill="#450d60"/>
<rect x="277.32" y="300.52" width="4.52" height="4.52" fill="#423c82"/>
<defs><linearGradient id="cbg" x1="0" y1="1" x2="0" y2="0">
<stop offset="0.000" stop-color="#440154"/>
<stop offset="0.111" stop-color="#482878"/>
<stop offset="0.222" stop-color="#3e4a89"/>
<stop offset="0.333" stop-color="#31688e"/>
<stop offset="0.444" stop-color="#26828e"/>
<stop offset="0.556" stop-color="#1f9e89"/>
<stop offset="0.667" stop-color="#35b779"/>
<stop offset="0.778" stop-color="#6dcd59"/>
<stop offset="0.889" stop-color="#b4de2c"/>
<stop offset="1.000" stop-color="#fde725"/>
</linearGradient>
<filter id="bl" x="-5%" y="-20%" width="110%" height="140%"><feGaussianBlur stdDeviation="1.1 1.8"/></filter>
<filter id="bl2" x="-5%" y="-20%" width="110%" height="140%"><feGaussianBlur stdDeviation="0.6 0.55"/></filter>
<filter id="bl3" x="-2%" y="-10%" width="104%" height="120%"><feGaussianBlur stdDeviation="0.8 0.6"/></filter>
<clipPath id="c1"><rect x="353" y="232.8" width="410.2" height="71.4"/></clipPath>
<clipPath id="c2"><rect x="353" y="340.2" width="409.8" height="71.4"/></clipPath>
</defs>
<rect x="297.8" y="233.4" width="3.8" height="71.6" fill="url(#cbg)"/>
<path d="M301.6 305.00 h1.8" stroke="#333" stroke-width="0.5"/>
<text x="305.6" y="308.20" font-family="DejaVu Sans, sans-serif" font-size="6.9" fill="#262626">0.00</text>
<path d="M301.6 289.09 h1.8" stroke="#333" stroke-width="0.5"/>
<text x="305.6" y="292.29" font-family="DejaVu Sans, sans-serif" font-size="6.9" fill="#262626">0.05</text>
<path d="M301.6 273.18 h1.8" stroke="#333" stroke-width="0.5"/>
<text x="305.6" y="276.38" font-family="DejaVu Sans, sans-serif" font-size="6.9" fill="#262626">0.10</text>
<path d="M301.6 257.27 h1.8" stroke="#333" stroke-width="0.5"/>
<text x="305.6" y="260.47" font-family="DejaVu Sans, sans-serif" font-size="6.9" fill="#262626">0.15</text>
<path d="M301.6 241.36 h1.8" stroke="#333" stroke-width="0.5"/>
<text x="305.6" y="244.56" font-family="DejaVu Sans, sans-serif" font-size="6.9" fill="#262626">0.20</text>
<text x="246.2" y="229.8" text-anchor="middle" font-family="DejaVu Sans, sans-serif" font-size="8.1" fill="#262626" id="embt">embedding</text>
<g clip-path="url(#c1)">
<rect x="345" y="222.8" width="430" height="92" fill="#26838e"/>
<g filter="url(#bl)">
<rect x="343.0" y="222.8" width="18.5" height="18.4" fill="#209b8a"/>
<rect x="361.0" y="222.8" width="8.5" height="18.4" fill="#2bab81"/>
<rect x="369.0" y="222.8" width="8.5" height="18.4" fill="#3fbb73"/>
<rect x="377.0" y="222.8" width="8.5" height="18.4" fill="#3fbb73"/>
<rect x="385.0" y="222.8" width="8.5" height="18.4" fill="#24888d"/>
<rect x="393.0" y="222.8" width="8.5" height="18.4" fill="#2b778e"/>
<rect x="401.0" y="222.8" width="8.5" height="18.4" fill="#2bab81"/>
<rect x="409.0" y="222.8" width="8.5" height="18.4" fill="#3fbb73"/>
<rect x="417.0" y="222.8" width="8.5" height="18.4" fill="#209b8a"/>
<rect x="425.0" y="222.8" width="8.5" height="18.4" fill="#24888d"/>
<rect x="433.0" y="222.8" width="8.5" height="18.4" fill="#2bab81"/>
<rect x="441.0" y="222.8" width="8.5" height="18.4" fill="#24888d"/>
<rect x="449.0" y="222.8" width="8.5" height="18.4" fill="#209b8a"/>
<rect x="457.0" y="222.8" width="8.5" height="18.4" fill="#24888d"/>
<rect x="465.0" y="222.8" width="8.5" height="18.4" fill="#209b8a"/>
<rect x="473.0" y="222.8" width="8.5" height="18.4" fill="#2bab81"/>
<rect x="343.0" y="240.7" width="18.5" height="8.4" fill="#24888d"/>
<rect x="361.0" y="240.7" width="8.5" height="8.4" fill="#3fbb73"/>
<rect x="369.0" y="240.7" width="8.5" height="8.4" fill="#63c95e"/>
<rect x="377.0" y="240.7" width="8.5" height="8.4" fill="#bbdf2b"/>
<rect x="385.0" y="240.7" width="8.5" height="8.4" fill="#24888d"/>
<rect x="393.0" y="240.7" width="8.5" height="8.4" fill="#32668e"/>
<rect x="401.0" y="240.7" width="8.5" height="8.4" fill="#8fd543"/>
<rect x="409.0" y="240.7" width="8.5" height="8.4" fill="#24888d"/>
<rect x="417.0" y="240.7" width="8.5" height="8.4" fill="#2b778e"/>
<rect x="425.0" y="240.7" width="8.5" height="8.4" fill="#32668e"/>
<rect x="433.0" y="240.7" width="8.5" height="8.4" fill="#2b778e"/>
<rect x="441.0" y="240.7" width="8.5" height="8.4" fill="#32668e"/>
<rect x="449.0" y="240.7" width="8.5" height="8.4" fill="#2b778e"/>
<rect x="457.0" y="240.7" width="8.5" height="8.4" fill="#2bab81"/>
<rect x="465.0" y="240.7" width="8.5" height="8.4" fill="#2bab81"/>
<rect x="473.0" y="240.7" width="8.5" height="8.4" fill="#3fbb73"/>
<rect x="343.0" y="248.7" width="18.5" height="8.4" fill="#24888d"/>
<rect x="361.0" y="248.7" width="8.5" height="8.4" fill="#3fbb73"/>
<rect x="369.0" y="248.7" width="8.5" height="8.4" fill="#3fbb73"/>
<rect x="377.0" y="248.7" width="8.5" height="8.4" fill="#bbdf2b"/>
<rect x="385.0" y="248.7" width="8.5" height="8.4" fill="#24888d"/>
<rect x="393.0" y="248.7" width="8.5" height="8.4" fill="#32668e"/>
<rect x="401.0" y="248.7" width="8.5" height="8.4" fill="#63c95e"/>
<rect x="409.0" y="248.7" width="8.5" height="8.4" fill="#2b778e"/>
<rect x="417.0" y="248.7" width="8.5" height="8.4" fill="#3a528a"/>
<rect x="425.0" y="248.7" width="8.5" height="8.4" fill="#3a528a"/>
<rect x="433.0" y="248.7" width="8.5" height="8.4" fill="#2b778e"/>
<rect x="441.0" y="248.7" width="8.5" height="8.4" fill="#423d83"/>
<rect x="449.0" y="248.7" width="8.5" height="8.4" fill="#32668e"/>
<rect x="457.0" y="248.7" width="8.5" height="8.4" fill="#2bab81"/>
<rect x="465.0" y="248.7" width="8.5" height="8.4" fill="#24888d"/>
<rect x="473.0" y="248.7" width="8.5" height="8.4" fill="#209b8a"/>
<rect x="343.0" y="256.6" width="18.5" height="8.4" fill="#2b778e"/>
<rect x="361.0" y="256.6" width="8.5" height="8.4" fill="#2b778e"/>
<rect x="369.0" y="256.6" width="8.5" height="8.4" fill="#24888d"/>
<rect x="377.0" y="256.6" width="8.5" height="8.4" fill="#8fd543"/>
<rect x="385.0" y="256.6" width="8.5" height="8.4" fill="#2b778e"/>
<rect x="393.0" y="256.6" width="8.5" height="8.4" fill="#32668e"/>
<rect x="401.0" y="256.6" width="8.5" height="8.4" fill="#209b8a"/>
<rect x="409.0" y="256.6" width="8.5" height="8.4" fill="#2b778e"/>
<rect x="417.0" y="256.6" width="8.5" height="8.4" fill="#423d83"/>
<rect x="425.0" y="256.6" width="8.5" height="8.4" fill="#423d83"/>
<rect x="433.0" y="256.6" width="8.5" height="8.4" fill="#2b778e"/>
<rect x="441.0" y="256.6" width="8.5" height="8.4" fill="#482777"/>
<rect x="449.0" y="256.6" width="8.5" height="8.4" fill="#32668e"/>
<rect x="457.0" y="256.6" width="8.5" height="8.4" fill="#24888d"/>
<rect x="465.0" y="256.6" width="8.5" height="8.4" fill="#209b8a"/>
<rect x="473.0" y="256.6" width="8.5" height="8.4" fill="#2bab81"/>
<rect x="343.0" y="264.5" width="18.5" height="8.4" fill="#2b778e"/>
<rect x="361.0" y="264.5" width="8.5" height="8.4" fill="#2b778e"/>
<rect x="369.0" y="264.5" width="8.5" height="8.4" fill="#24888d"/>
<rect x="377.0" y="264.5" width="8.5" height="8.4" fill="#63c95e"/>
<rect x="385.0" y="264.5" width="8.5" height="8.4" fill="#2b778e"/>
<rect x="393.0" y="264.5" width="8.5" height="8.4" fill="#32668e"/>
<rect x="401.0" y="264.5" width="8.5" height="8.4" fill="#24888d"/>
<rect x="409.0" y="264.5" width="8.5" height="8.4" fill="#209b8a"/>
<rect x="417.0" y="264.5" width="8.5" height="8.4" fill="#2b778e"/>
<rect x="425.0" y="264.5" width="8.5" height="8.4" fill="#32668e"/>
<rect x="433.0" y="264.5" width="8.5" height="8.4" fill="#24888d"/>
<rect x="441.0" y="264.5" width="8.5" height="8.4" fill="#423d83"/>
<rect x="449.0" y="264.5" width="8.5" height="8.4" fill="#32668e"/>
<rect x="457.0" y="264.5" width="8.5" height="8.4" fill="#24888d"/>
<rect x="465.0" y="264.5" width="8.5" height="8.4" fill="#209b8a"/>
<rect x="473.0" y="264.5" width="8.5" height="8.4" fill="#3fbb73"/>
<rect x="343.0" y="272.5" width="18.5" height="8.4" fill="#2b778e"/>
<rect x="361.0" y="272.5" width="8.5" height="8.4" fill="#24888d"/>
<rect x="369.0" y="272.5" width="8.5" height="8.4" fill="#24888d"/>
<rect x="377.0" y="272.5" width="8.5" height="8.4" fill="#209b8a"/>
<rect x="385.0" y="272.5" width="8.5" height="8.4" fill="#24888d"/>
<rect x="393.0" y="272.5" width="8.5" height="8.4" fill="#32668e"/>
<rect x="401.0" y="272.5" width="8.5" height="8.4" fill="#24888d"/>
<rect x="409.0" y="272.5" width="8.5" height="8.4" fill="#2bab81"/>
<rect x="417.0" y="272.5" width="8.5" height="8.4" fill="#209b8a"/>
<rect x="425.0" y="272.5" width="8.5" height="8.4" fill="#2b778e"/>
<rect x="433.0" y="272.5" width="8.5" height="8.4" fill="#209b8a"/>
<rect x="441.0" y="272.5" width="8.5" height="8.4" fill="#3a528a"/>
<rect x="449.0" y="272.5" width="8.5" height="8.4" fill="#2b778e"/>
<rect x="457.0" y="272.5" width="8.5" height="8.4" fill="#2b778e"/>
<rect x="465.0" y="272.5" width="8.5" height="8.4" fill="#209b8a"/>
<rect x="473.0" y="272.5" width="8.5" height="8.4" fill="#2bab81"/>
<rect x="343.0" y="280.4" width="18.5" height="8.4" fill="#24888d"/>
<rect x="361.0" y="280.4" width="8.5" height="8.4" fill="#209b8a"/>
<rect x="369.0" y="280.4" width="8.5" height="8.4" fill="#209b8a"/>
<rect x="377.0" y="280.4" width="8.5" height="8.4" fill="#bbdf2b"/>
<rect x="385.0" y="280.4" width="8.5" height="8.4" fill="#209b8a"/>
<rect x="393.0" y="280.4" width="8.5" height="8.4" fill="#3a528a"/>
<rect x="401.0" y="280.4" width="8.5" height="8.4" fill="#8fd543"/>
<rect x="409.0" y="280.4" width="8.5" height="8.4" fill="#3fbb73"/>
<rect x="417.0" y="280.4" width="8.5" height="8.4" fill="#209b8a"/>
<rect x="425.0" y="280.4" width="8.5" height="8.4" fill="#32668e"/>
<rect x="433.0" y="280.4" width="8.5" height="8.4" fill="#209b8a"/>
<rect x="441.0" y="280.4" width="8.5" height="8.4" fill="#2b778e"/>
<rect x="449.0" y="280.4" width="8.5" height="8.4" fill="#2b778e"/>
<rect x="457.0" y="280.4" width="8.5" height="8.4" fill="#2bab81"/>
<rect x="465.0" y="280.4" width="8.5" height="8.4" fill="#2bab81"/>
<rect x="473.0" y="280.4" width="8.5" height="8.4" fill="#2bab81"/>
<rect x="343.0" y="288.3" width="18.5" height="8.4" fill="#24888d"/>
<rect x="361.0" y="288.3" width="8.5" height="8.4" fill="#24888d"/>
<rect x="369.0" y="288.3" width="8.5" height="8.4" fill="#209b8a"/>
<rect x="377.0" y="288.3" width="8.5" height="8.4" fill="#209b8a"/>
<rect x="385.0" y="288.3" width="8.5" height="8.4" fill="#24888d"/>
<rect x="393.0" y="288.3" width="8.5" height="8.4" fill="#423d83"/>
<rect x="401.0" y="288.3" width="8.5" height="8.4" fill="#2b778e"/>
<rect x="409.0" y="288.3" width="8.5" height="8.4" fill="#32668e"/>
<rect x="417.0" y="288.3" width="8.5" height="8.4" fill="#2b778e"/>
<rect x="425.0" y="288.3" width="8.5" height="8.4" fill="#482777"/>
<rect x="433.0" y="288.3" width="8.5" height="8.4" fill="#32668e"/>
<rect x="441.0" y="288.3" width="8.5" height="8.4" fill="#423d83"/>
<rect x="449.0" y="288.3" width="8.5" height="8.4" fill="#3a528a"/>
<rect x="457.0" y="288.3" width="8.5" height="8.4" fill="#24888d"/>
<rect x="465.0" y="288.3" width="8.5" height="8.4" fill="#2b778e"/>
<rect x="473.0" y="288.3" width="8.5" height="8.4" fill="#24888d"/>
<rect x="343.0" y="296.3" width="18.5" height="18.4" fill="#24888d"/>
<rect x="361.0" y="296.3" width="8.5" height="18.4" fill="#24888d"/>
<rect x="369.0" y="296.3" width="8.5" height="18.4" fill="#2bab81"/>
<rect x="377.0" y="296.3" width="8.5" height="18.4" fill="#209b8a"/>
<rect x="385.0" y="296.3" width="8.5" height="18.4" fill="#2b778e"/>
<rect x="393.0" y="296.3" width="8.5" height="18.4" fill="#3a528a"/>
<rect x="401.0" y="296.3" width="8.5" height="18.4" fill="#24888d"/>
<rect x="409.0" y="296.3" width="8.5" height="18.4" fill="#32668e"/>
<rect x="417.0" y="296.3" width="8.5" height="18.4" fill="#3fbb73"/>
<rect x="425.0" y="296.3" width="8.5" height="18.4" fill="#3a528a"/>
<rect x="433.0" y="296.3" width="8.5" height="18.4" fill="#2b778e"/>
<rect x="441.0" y="296.3" width="8.5" height="18.4" fill="#3a528a"/>
<rect x="449.0" y="296.3" width="8.5" height="18.4" fill="#32668e"/>
<rect x="457.0" y="296.3" width="8.5" height="18.4" fill="#209b8a"/>
<rect x="465.0" y="296.3" width="8.5" height="18.4" fill="#24888d"/>
<rect x="473.0" y="296.3" width="8.5" height="18.4" fill="#24888d"/>
<rect x="481.0" y="222.8" width="8.5" height="18.4" fill="#209b8a"/>
<rect x="489.0" y="222.8" width="8.5" height="18.4" fill="#2bab81"/>
<rect x="497.0" y="222.8" width="8.5" height="18.4" fill="#24888d"/>
<rect x="505.0" y="222.8" width="8.5" height="18.4" fill="#24888d"/>
<rect x="513.0" y="222.8" width="8.5" height="18.4" fill="#209b8a"/>
<rect x="521.0" y="222.8" width="8.5" height="18.4" fill="#2bab81"/>
<rect x="529.0" y="222.8" width="8.5" height="18.4" fill="#2bab81"/>
<rect x="537.0" y="222.8" width="8.5" height="18.4" fill="#24888d"/>
<rect x="545.0" y="222.8" width="8.5" height="18.4" fill="#209b8a"/>
<rect x="553.0" y="222.8" width="8.5" height="18.4" fill="#2bab81"/>
<rect x="561.0" y="222.8" width="8.5" height="18.4" fill="#209b8a"/>
<rect x="569.0" y="222.8" width="8.5" height="18.4" fill="#209b8a"/>
<rect x="577.0" y="222.8" width="8.5" height="18.4" fill="#24888d"/>
<rect x="585.0" y="222.8" width="8.5" height="18.4" fill="#32668e"/>
<rect x="593.0" y="222.8" width="8.5" height="18.4" fill="#32668e"/>
<rect x="601.0" y="222.8" width="8.5" height="18.4" fill="#2b778e"/>
<rect x="481.0" y="240.7" width="8.5" height="8.4" fill="#2bab81"/>
<rect x="489.0" y="240.7" width="8.5" height="8.4" fill="#3fbb73"/>
<rect x="497.0" y="240.7" width="8.5" height="8.4" fill="#2b778e"/>
<rect x="505.0" y="240.7" width="8.5" height="8.4" fill="#209b8a"/>
<rect x="513.0" y="240.7" width="8.5" height="8.4" fill="#2bab81"/>
<rect x="521.0" y="240.7" width="8.5" height="8.4" fill="#3fbb73"/>
<rect x="529.0" y="240.7" width="8.5" height="8.4" fill="#209b8a"/>
<rect x="537.0" y="240.7" width="8.5" height="8.4" fill="#2b778e"/>
<rect x="545.0" y="240.7" width="8.5" height="8.4" fill="#2bab81"/>
<rect x="553.0" y="240.7" width="8.5" height="8.4" fill="#2bab81"/>
<rect x="561.0" y="240.7" width="8.5" height="8.4" fill="#24888d"/>
<rect x="569.0" y="240.7" width="8.5" height="8.4" fill="#63c95e"/>
<rect x="577.0" y="240.7" width="8.5" height="8.4" fill="#209b8a"/>
<rect x="585.0" y="240.7" width="8.5" height="8.4" fill="#32668e"/>
<rect x="593.0" y="240.7" width="8.5" height="8.4" fill="#3a528a"/>
<rect x="601.0" y="240.7" width="8.5" height="8.4" fill="#32668e"/>
<rect x="481.0" y="248.7" width="8.5" height="8.4" fill="#24888d"/>
<rect x="489.0" y="248.7" width="8.5" height="8.4" fill="#24888d"/>
<rect x="497.0" y="248.7" width="8.5" height="8.4" fill="#2b778e"/>
<rect x="505.0" y="248.7" width="8.5" height="8.4" fill="#2bab81"/>
<rect x="513.0" y="248.7" width="8.5" height="8.4" fill="#2b778e"/>
<rect x="521.0" y="248.7" width="8.5" height="8.4" fill="#24888d"/>
<rect x="529.0" y="248.7" width="8.5" height="8.4" fill="#24888d"/>
<rect x="537.0" y="248.7" width="8.5" height="8.4" fill="#32668e"/>
<rect x="545.0" y="248.7" width="8.5" height="8.4" fill="#32668e"/>
<rect x="553.0" y="248.7" width="8.5" height="8.4" fill="#209b8a"/>
<rect x="561.0" y="248.7" width="8.5" height="8.4" fill="#2b778e"/>
<rect x="569.0" y="248.7" width="8.5" height="8.4" fill="#3fbb73"/>
<rect x="577.0" y="248.7" width="8.5" height="8.4" fill="#209b8a"/>
<rect x="585.0" y="248.7" width="8.5" height="8.4" fill="#24888d"/>
<rect x="593.0" y="248.7" width="8.5" height="8.4" fill="#24888d"/>
<rect x="601.0" y="248.7" width="8.5" height="8.4" fill="#24888d"/>
<rect x="481.0" y="256.6" width="8.5" height="8.4" fill="#2b778e"/>
<rect x="489.0" y="256.6" width="8.5" height="8.4" fill="#32668e"/>
<rect x="497.0" y="256.6" width="8.5" height="8.4" fill="#2b778e"/>
<rect x="505.0" y="256.6" width="8.5" height="8.4" fill="#209b8a"/>
<rect x="513.0" y="256.6" width="8.5" height="8.4" fill="#2b778e"/>
<rect x="521.0" y="256.6" width="8.5" height="8.4" fill="#24888d"/>
<rect x="529.0" y="256.6" width="8.5" height="8.4" fill="#24888d"/>
<rect x="537.0" y="256.6" width="8.5" height="8.4" fill="#32668e"/>
<rect x="545.0" y="256.6" width="8.5" height="8.4" fill="#482777"/>
<rect x="553.0" y="256.6" width="8.5" height="8.4" fill="#24888d"/>
<rect x="561.0" y="256.6" width="8.5" height="8.4" fill="#3a528a"/>
<rect x="569.0" y="256.6" width="8.5" height="8.4" fill="#3fbb73"/>
<rect x="577.0" y="256.6" width="8.5" height="8.4" fill="#24888d"/>
<rect x="585.0" y="256.6" width="8.5" height="8.4" fill="#24888d"/>
<rect x="593.0" y="256.6" width="8.5" height="8.4" fill="#24888d"/>
<rect x="601.0" y="256.6" width="8.5" height="8.4" fill="#24888d"/>
<rect x="481.0" y="264.5" width="8.5" height="8.4" fill="#209b8a"/>
<rect x="489.0" y="264.5" width="8.5" height="8.4" fill="#32668e"/>
<rect x="497.0" y="264.5" width="8.5" height="8.4" fill="#24888d"/>
<rect x="505.0" y="264.5" width="8.5" height="8.4" fill="#63c95e"/>
<rect x="513.0" y="264.5" width="8.5" height="8.4" fill="#2b778e"/>
<rect x="521.0" y="264.5" width="8.5" height="8.4" fill="#2b778e"/>
<rect x="529.0" y="264.5" width="8.5" height="8.4" fill="#3fbb73"/>
<rect x="537.0" y="264.5" width="8.5" height="8.4" fill="#209b8a"/>
<rect x="545.0" y="264.5" width="8.5" height="8.4" fill="#2b778e"/>
<rect x="553.0" y="264.5" width="8.5" height="8.4" fill="#32668e"/>
<rect x="561.0" y="264.5" width="8.5" height="8.4" fill="#32668e"/>
<rect x="569.0" y="264.5" width="8.5" height="8.4" fill="#63c95e"/>
<rect x="577.0" y="264.5" width="8.5" height="8.4" fill="#24888d"/>
<rect x="585.0" y="264.5" width="8.5" height="8.4" fill="#24888d"/>
<rect x="593.0" y="264.5" width="8.5" height="8.4" fill="#2b778e"/>
<rect x="601.0" y="264.5" width="8.5" height="8.4" fill="#3fbb73"/>
<rect x="481.0" y="272.5" width="8.5" height="8.4" fill="#32668e"/>
<rect x="489.0" y="272.5" width="8.5" height="8.4" fill="#423d83"/>
<rect x="497.0" y="272.5" width="8.5" height="8.4" fill="#3a528a"/>
<rect x="505.0" y="272.5" width="8.5" height="8.4" fill="#2b778e"/>
<rect x="513.0" y="272.5" width="8.5" height="8.4" fill="#32668e"/>
<rect x="521.0" y="272.5" width="8.5" height="8.4" fill="#24888d"/>
<rect x="529.0" y="272.5" width="8.5" height="8.4" fill="#24888d"/>
<rect x="537.0" y="272.5" width="8.5" height="8.4" fill="#209b8a"/>
<rect x="545.0" y="272.5" width="8.5" height="8.4" fill="#3fbb73"/>
<rect x="553.0" y="272.5" width="8.5" height="8.4" fill="#32668e"/>
<rect x="561.0" y="272.5" width="8.5" height="8.4" fill="#3a528a"/>
<rect x="569.0" y="272.5" width="8.5" height="8.4" fill="#209b8a"/>
<rect x="577.0" y="272.5" width="8.5" height="8.4" fill="#24888d"/>
<rect x="585.0" y="272.5" width="8.5" height="8.4" fill="#24888d"/>
<rect x="593.0" y="272.5" width="8.5" height="8.4" fill="#32668e"/>
<rect x="601.0" y="272.5" width="8.5" height="8.4" fill="#2bab81"/>
<rect x="481.0" y="280.4" width="8.5" height="8.4" fill="#2bab81"/>
<rect x="489.0" y="280.4" width="8.5" height="8.4" fill="#209b8a"/>
<rect x="497.0" y="280.4" width="8.5" height="8.4" fill="#209b8a"/>
<rect x="505.0" y="280.4" width="8.5" height="8.4" fill="#209b8a"/>
<rect x="513.0" y="280.4" width="8.5" height="8.4" fill="#2b778e"/>
<rect x="521.0" y="280.4" width="8.5" height="8.4" fill="#2bab81"/>
<rect x="529.0" y="280.4" width="8.5" height="8.4" fill="#209b8a"/>
<rect x="537.0" y="280.4" width="8.5" height="8.4" fill="#2bab81"/>
<rect x="545.0" y="280.4" width="8.5" height="8.4" fill="#8fd543"/>
<rect x="553.0" y="280.4" width="8.5" height="8.4" fill="#209b8a"/>
<rect x="561.0" y="280.4" width="8.5" height="8.4" fill="#32668e"/>
<rect x="569.0" y="280.4" width="8.5" height="8.4" fill="#bbdf2b"/>
<rect x="577.0" y="280.4" width="8.5" height="8.4" fill="#2bab81"/>
<rect x="585.0" y="280.4" width="8.5" height="8.4" fill="#209b8a"/>
<rect x="593.0" y="280.4" width="8.5" height="8.4" fill="#24888d"/>
<rect x="601.0" y="280.4" width="8.5" height="8.4" fill="#209b8a"/>
<rect x="481.0" y="288.3" width="8.5" height="8.4" fill="#24888d"/>
<rect x="489.0" y="288.3" width="8.5" height="8.4" fill="#209b8a"/>
<rect x="497.0" y="288.3" width="8.5" height="8.4" fill="#24888d"/>
<rect x="505.0" y="288.3" width="8.5" height="8.4" fill="#2b778e"/>
<rect x="513.0" y="288.3" width="8.5" height="8.4" fill="#32668e"/>
<rect x="521.0" y="288.3" width="8.5" height="8.4" fill="#24888d"/>
<rect x="529.0" y="288.3" width="8.5" height="8.4" fill="#24888d"/>
<rect x="537.0" y="288.3" width="8.5" height="8.4" fill="#209b8a"/>
<rect x="545.0" y="288.3" width="8.5" height="8.4" fill="#8fd543"/>
<rect x="553.0" y="288.3" width="8.5" height="8.4" fill="#2b778e"/>
<rect x="561.0" y="288.3" width="8.5" height="8.4" fill="#32668e"/>
<rect x="569.0" y="288.3" width="8.5" height="8.4" fill="#209b8a"/>
<rect x="577.0" y="288.3" width="8.5" height="8.4" fill="#24888d"/>
<rect x="585.0" y="288.3" width="8.5" height="8.4" fill="#3a528a"/>
<rect x="593.0" y="288.3" width="8.5" height="8.4" fill="#3a528a"/>
<rect x="601.0" y="288.3" width="8.5" height="8.4" fill="#24888d"/>
<rect x="481.0" y="296.3" width="8.5" height="18.4" fill="#24888d"/>
<rect x="489.0" y="296.3" width="8.5" height="18.4" fill="#2b778e"/>
<rect x="497.0" y="296.3" width="8.5" height="18.4" fill="#24888d"/>
<rect x="505.0" y="296.3" width="8.5" height="18.4" fill="#2b778e"/>
<rect x="513.0" y="296.3" width="8.5" height="18.4" fill="#2b778e"/>
<rect x="521.0" y="296.3" width="8.5" height="18.4" fill="#24888d"/>
<rect x="529.0" y="296.3" width="8.5" height="18.4" fill="#24888d"/>
<rect x="537.0" y="296.3" width="8.5" height="18.4" fill="#209b8a"/>
<rect x="545.0" y="296.3" width="8.5" height="18.4" fill="#bbdf2b"/>
<rect x="553.0" y="296.3" width="8.5" height="18.4" fill="#2b778e"/>
<rect x="561.0" y="296.3" width="8.5" height="18.4" fill="#32668e"/>
<rect x="569.0" y="296.3" width="8.5" height="18.4" fill="#209b8a"/>
<rect x="577.0" y="296.3" width="8.5" height="18.4" fill="#32668e"/>
<rect x="585.0" y="296.3" width="8.5" height="18.4" fill="#482777"/>
<rect x="593.0" y="296.3" width="8.5" height="18.4" fill="#423d83"/>
<rect x="601.0" y="296.3" width="8.5" height="18.4" fill="#209b8a"/>
<rect x="609.0" y="222.8" width="8.5" height="18.4" fill="#209b8a"/>
<rect x="617.0" y="222.8" width="8.5" height="18.4" fill="#209b8a"/>
<rect x="625.0" y="222.8" width="8.5" height="18.4" fill="#209b8a"/>
<rect x="633.0" y="222.8" width="8.5" height="18.4" fill="#2b778e"/>
<rect x="641.0" y="222.8" width="8.5" height="18.4" fill="#2b778e"/>
<rect x="649.0" y="222.8" width="8.5" height="18.4" fill="#24888d"/>
<rect x="657.0" y="222.8" width="8.5" height="18.4" fill="#32668e"/>
<rect x="665.0" y="222.8" width="8.5" height="18.4" fill="#24888d"/>
<rect x="673.0" y="222.8" width="8.5" height="18.4" fill="#24888d"/>
<rect x="681.0" y="222.8" width="8.5" height="18.4" fill="#24888d"/>
<rect x="689.0" y="222.8" width="8.5" height="18.4" fill="#24888d"/>
<rect x="697.0" y="222.8" width="8.5" height="18.4" fill="#2bab81"/>
<rect x="705.0" y="222.8" width="8.5" height="18.4" fill="#209b8a"/>
<rect x="713.0" y="222.8" width="8.5" height="18.4" fill="#24888d"/>
<rect x="721.0" y="222.8" width="8.5" height="18.4" fill="#24888d"/>
<rect x="729.0" y="222.8" width="8.5" height="18.4" fill="#32668e"/>
<rect x="609.0" y="240.7" width="8.5" height="8.4" fill="#2bab81"/>
<rect x="617.0" y="240.7" width="8.5" height="8.4" fill="#24888d"/>
<rect x="625.0" y="240.7" width="8.5" height="8.4" fill="#209b8a"/>
<rect x="633.0" y="240.7" width="8.5" height="8.4" fill="#32668e"/>
<rect x="641.0" y="240.7" width="8.5" height="8.4" fill="#32668e"/>
<rect x="649.0" y="240.7" width="8.5" height="8.4" fill="#2b778e"/>
<rect x="657.0" y="240.7" width="8.5" height="8.4" fill="#32668e"/>
<rect x="665.0" y="240.7" width="8.5" height="8.4" fill="#3a528a"/>
<rect x="673.0" y="240.7" width="8.5" height="8.4" fill="#287e8e"/>
<rect x="681.0" y="240.7" width="8.5" height="8.4" fill="#287e8e"/>
<rect x="689.0" y="240.7" width="8.5" height="8.4" fill="#3a528a"/>
<rect x="697.0" y="240.7" width="8.5" height="8.4" fill="#3fbb73"/>
<rect x="705.0" y="240.7" width="8.5" height="8.4" fill="#209b8a"/>
<rect x="713.0" y="240.7" width="8.5" height="8.4" fill="#2b778e"/>
<rect x="721.0" y="240.7" width="8.5" height="8.4" fill="#2b778e"/>
<rect x="729.0" y="240.7" width="8.5" height="8.4" fill="#32668e"/>
<rect x="609.0" y="248.7" width="8.5" height="8.4" fill="#24888d"/>
<rect x="617.0" y="248.7" width="8.5" height="8.4" fill="#2b778e"/>
<rect x="625.0" y="248.7" width="8.5" height="8.4" fill="#32668e"/>
<rect x="633.0" y="248.7" width="8.5" height="8.4" fill="#3a528a"/>
<rect x="641.0" y="248.7" width="8.5" height="8.4" fill="#3a528a"/>
<rect x="649.0" y="248.7" width="8.5" height="8.4" fill="#32668e"/>
<rect x="657.0" y="248.7" width="8.5" height="8.4" fill="#32668e"/>
<rect x="665.0" y="248.7" width="8.5" height="8.4" fill="#423d83"/>
<rect x="673.0" y="248.7" width="8.5" height="8.4" fill="#287e8e"/>
<rect x="681.0" y="248.7" width="8.5" height="8.4" fill="#287e8e"/>
<rect x="689.0" y="248.7" width="8.5" height="8.4" fill="#3a528a"/>
<rect x="697.0" y="248.7" width="8.5" height="8.4" fill="#2bab81"/>
<rect x="705.0" y="248.7" width="8.5" height="8.4" fill="#209b8a"/>
<rect x="713.0" y="248.7" width="8.5" height="8.4" fill="#2b778e"/>
<rect x="721.0" y="248.7" width="8.5" height="8.4" fill="#2b778e"/>
<rect x="729.0" y="248.7" width="8.5" height="8.4" fill="#3a528a"/>
<rect x="609.0" y="256.6" width="8.5" height="8.4" fill="#2b778e"/>
<rect x="617.0" y="256.6" width="8.5" height="8.4" fill="#2b778e"/>
<rect x="625.0" y="256.6" width="8.5" height="8.4" fill="#3a528a"/>
<rect x="633.0" y="256.6" width="8.5" height="8.4" fill="#423d83"/>
<rect x="641.0" y="256.6" width="8.5" height="8.4" fill="#423d83"/>
<rect x="649.0" y="256.6" width="8.5" height="8.4" fill="#3a528a"/>
<rect x="657.0" y="256.6" width="8.5" height="8.4" fill="#3a528a"/>
<rect x="665.0" y="256.6" width="8.5" height="8.4" fill="#482777"/>
<rect x="673.0" y="256.6" width="8.5" height="8.4" fill="#287e8e"/>
<rect x="681.0" y="256.6" width="8.5" height="8.4" fill="#287e8e"/>
<rect x="689.0" y="256.6" width="8.5" height="8.4" fill="#3a528a"/>
<rect x="697.0" y="256.6" width="8.5" height="8.4" fill="#2bab81"/>
<rect x="705.0" y="256.6" width="8.5" height="8.4" fill="#209b8a"/>
<rect x="713.0" y="256.6" width="8.5" height="8.4" fill="#24888d"/>
<rect x="721.0" y="256.6" width="8.5" height="8.4" fill="#32668e"/>
<rect x="729.0" y="256.6" width="8.5" height="8.4" fill="#482777"/>
<rect x="609.0" y="264.5" width="8.5" height="8.4" fill="#209b8a"/>
<rect x="617.0" y="264.5" width="8.5" height="8.4" fill="#32668e"/>
<rect x="625.0" y="264.5" width="8.5" height="8.4" fill="#24888d"/>
<rect x="633.0" y="264.5" width="8.5" height="8.4" fill="#423d83"/>
<rect x="641.0" y="264.5" width="8.5" height="8.4" fill="#3a528a"/>
<rect x="649.0" y="264.5" width="8.5" height="8.4" fill="#32668e"/>
<rect x="657.0" y="264.5" width="8.5" height="8.4" fill="#32668e"/>
<rect x="665.0" y="264.5" width="8.5" height="8.4" fill="#423d83"/>
<rect x="673.0" y="264.5" width="8.5" height="8.4" fill="#287e8e"/>
<rect x="681.0" y="264.5" width="8.5" height="8.4" fill="#25858e"/>
<rect x="689.0" y="264.5" width="8.5" height="8.4" fill="#3a528a"/>
<rect x="697.0" y="264.5" width="8.5" height="8.4" fill="#2bab81"/>
<rect x="705.0" y="264.5" width="8.5" height="8.4" fill="#63c95e"/>
<rect x="713.0" y="264.5" width="8.5" height="8.4" fill="#209b8a"/>
<rect x="721.0" y="264.5" width="8.5" height="8.4" fill="#2bab81"/>
<rect x="729.0" y="264.5" width="8.5" height="8.4" fill="#2b778e"/>
<rect x="609.0" y="272.5" width="8.5" height="8.4" fill="#2bab81"/>
<rect x="617.0" y="272.5" width="8.5" height="8.4" fill="#209b8a"/>
<rect x="625.0" y="272.5" width="8.5" height="8.4" fill="#2bab81"/>
<rect x="633.0" y="272.5" width="8.5" height="8.4" fill="#32668e"/>
<rect x="641.0" y="272.5" width="8.5" height="8.4" fill="#2b778e"/>
<rect x="649.0" y="272.5" width="8.5" height="8.4" fill="#209b8a"/>
<rect x="657.0" y="272.5" width="8.5" height="8.4" fill="#2b778e"/>
<rect x="665.0" y="272.5" width="8.5" height="8.4" fill="#32668e"/>
<rect x="673.0" y="272.5" width="8.5" height="8.4" fill="#2bab81"/>
<rect x="681.0" y="272.5" width="8.5" height="8.4" fill="#209b8a"/>
<rect x="689.0" y="272.5" width="8.5" height="8.4" fill="#2b778e"/>
<rect x="697.0" y="272.5" width="8.5" height="8.4" fill="#209b8a"/>
<rect x="705.0" y="272.5" width="8.5" height="8.4" fill="#2bab81"/>
<rect x="713.0" y="272.5" width="8.5" height="8.4" fill="#209b8a"/>
<rect x="721.0" y="272.5" width="8.5" height="8.4" fill="#24888d"/>
<rect x="729.0" y="272.5" width="8.5" height="8.4" fill="#423d83"/>
<rect x="609.0" y="280.4" width="8.5" height="8.4" fill="#63c95e"/>
<rect x="617.0" y="280.4" width="8.5" height="8.4" fill="#3fbb73"/>
<rect x="625.0" y="280.4" width="8.5" height="8.4" fill="#3fbb73"/>
<rect x="633.0" y="280.4" width="8.5" height="8.4" fill="#24888d"/>
<rect x="641.0" y="280.4" width="8.5" height="8.4" fill="#2bab81"/>
<rect x="649.0" y="280.4" width="8.5" height="8.4" fill="#2bab81"/>
<rect x="657.0" y="280.4" width="8.5" height="8.4" fill="#2bab81"/>
<rect x="665.0" y="280.4" width="8.5" height="8.4" fill="#3fbb73"/>
<rect x="673.0" y="280.4" width="8.5" height="8.4" fill="#8fd543"/>
<rect x="681.0" y="280.4" width="8.5" height="8.4" fill="#2bab81"/>
<rect x="689.0" y="280.4" width="8.5" height="8.4" fill="#2bab81"/>
<rect x="697.0" y="280.4" width="8.5" height="8.4" fill="#8fd543"/>
<rect x="705.0" y="280.4" width="8.5" height="8.4" fill="#2bab81"/>
<rect x="713.0" y="280.4" width="8.5" height="8.4" fill="#209b8a"/>
<rect x="721.0" y="280.4" width="8.5" height="8.4" fill="#209b8a"/>
<rect x="729.0" y="280.4" width="8.5" height="8.4" fill="#2b778e"/>
<rect x="609.0" y="288.3" width="8.5" height="8.4" fill="#2bab81"/>
<rect x="617.0" y="288.3" width="8.5" height="8.4" fill="#2bab81"/>
<rect x="625.0" y="288.3" width="8.5" height="8.4" fill="#209b8a"/>
<rect x="633.0" y="288.3" width="8.5" height="8.4" fill="#24888d"/>
<rect x="641.0" y="288.3" width="8.5" height="8.4" fill="#209b8a"/>
<rect x="649.0" y="288.3" width="8.5" height="8.4" fill="#32668e"/>
<rect x="657.0" y="288.3" width="8.5" height="8.4" fill="#209b8a"/>
<rect x="665.0" y="288.3" width="8.5" height="8.4" fill="#2bab81"/>
<rect x="673.0" y="288.3" width="8.5" height="8.4" fill="#2bab81"/>
<rect x="681.0" y="288.3" width="8.5" height="8.4" fill="#209b8a"/>
<rect x="689.0" y="288.3" width="8.5" height="8.4" fill="#3a528a"/>
<rect x="697.0" y="288.3" width="8.5" height="8.4" fill="#209b8a"/>
<rect x="705.0" y="288.3" width="8.5" height="8.4" fill="#209b8a"/>
<rect x="713.0" y="288.3" width="8.5" height="8.4" fill="#209b8a"/>
<rect x="721.0" y="288.3" width="8.5" height="8.4" fill="#24888d"/>
<rect x="729.0" y="288.3" width="8.5" height="8.4" fill="#24888d"/>
<rect x="609.0" y="296.3" width="8.5" height="18.4" fill="#209b8a"/>
<rect x="617.0" y="296.3" width="8.5" height="18.4" fill="#209b8a"/>
<rect x="625.0" y="296.3" width="8.5" height="18.4" fill="#209b8a"/>
<rect x="633.0" y="296.3" width="8.5" height="18.4" fill="#3fbb73"/>
<rect x="641.0" y="296.3" width="8.5" height="18.4" fill="#3fbb73"/>
<rect x="649.0" y="296.3" width="8.5" height="18.4" fill="#2b778e"/>
<rect x="657.0" y="296.3" width="8.5" height="18.4" fill="#209b8a"/>
<rect x="665.0" y="296.3" width="8.5" height="18.4" fill="#2bab81"/>
<rect x="673.0" y="296.3" width="8.5" height="18.4" fill="#2bab81"/>
<rect x="681.0" y="296.3" width="8.5" height="18.4" fill="#24888d"/>
<rect x="689.0" y="296.3" width="8.5" height="18.4" fill="#32668e"/>
<rect x="697.0" y="296.3" width="8.5" height="18.4" fill="#24888d"/>
<rect x="705.0" y="296.3" width="8.5" height="18.4" fill="#209b8a"/>
<rect x="713.0" y="296.3" width="8.5" height="18.4" fill="#209b8a"/>
<rect x="721.0" y="296.3" width="8.5" height="18.4" fill="#2bab81"/>
<rect x="729.0" y="296.3" width="8.5" height="18.4" fill="#3fbb73"/>
<rect x="737.0" y="222.8" width="8.5" height="18.4" fill="#209b8a"/>
<rect x="745.0" y="222.8" width="8.5" height="18.4" fill="#2bab81"/>
<rect x="753.0" y="222.8" width="8.5" height="18.4" fill="#2bab81"/>
<rect x="761.0" y="222.8" width="20.5" height="18.4" fill="#24888d"/>
<rect x="737.0" y="240.7" width="8.5" height="8.4" fill="#2bab81"/>
<rect x="745.0" y="240.7" width="8.5" height="8.4" fill="#24888d"/>
<rect x="753.0" y="240.7" width="8.5" height="8.4" fill="#2bab81"/>
<rect x="761.0" y="240.7" width="20.5" height="8.4" fill="#2b778e"/>
<rect x="737.0" y="248.7" width="8.5" height="8.4" fill="#209b8a"/>
<rect x="745.0" y="248.7" width="8.5" height="8.4" fill="#24888d"/>
<rect x="753.0" y="248.7" width="8.5" height="8.4" fill="#24888d"/>
<rect x="761.0" y="248.7" width="20.5" height="8.4" fill="#32668e"/>
<rect x="737.0" y="256.6" width="8.5" height="8.4" fill="#2bab81"/>
<rect x="745.0" y="256.6" width="8.5" height="8.4" fill="#24888d"/>
<rect x="753.0" y="256.6" width="8.5" height="8.4" fill="#2b778e"/>
<rect x="761.0" y="256.6" width="20.5" height="8.4" fill="#423d83"/>
<rect x="737.0" y="264.5" width="8.5" height="8.4" fill="#63c95e"/>
<rect x="745.0" y="264.5" width="8.5" height="8.4" fill="#209b8a"/>
<rect x="753.0" y="264.5" width="8.5" height="8.4" fill="#2b778e"/>
<rect x="761.0" y="264.5" width="20.5" height="8.4" fill="#3a528a"/>
<rect x="737.0" y="272.5" width="8.5" height="8.4" fill="#24888d"/>
<rect x="745.0" y="272.5" width="8.5" height="8.4" fill="#24888d"/>
<rect x="753.0" y="272.5" width="8.5" height="8.4" fill="#2b778e"/>
<rect x="761.0" y="272.5" width="20.5" height="8.4" fill="#482777"/>
<rect x="737.0" y="280.4" width="8.5" height="8.4" fill="#209b8a"/>
<rect x="745.0" y="280.4" width="8.5" height="8.4" fill="#24888d"/>
<rect x="753.0" y="280.4" width="8.5" height="8.4" fill="#2b778e"/>
<rect x="761.0" y="280.4" width="20.5" height="8.4" fill="#3a528a"/>
<rect x="737.0" y="288.3" width="8.5" height="8.4" fill="#24888d"/>
<rect x="745.0" y="288.3" width="8.5" height="8.4" fill="#24888d"/>
<rect x="753.0" y="288.3" width="8.5" height="8.4" fill="#2b778e"/>
<rect x="761.0" y="288.3" width="20.5" height="8.4" fill="#482777"/>
<rect x="737.0" y="296.3" width="8.5" height="18.4" fill="#24888d"/>
<rect x="745.0" y="296.3" width="8.5" height="18.4" fill="#24888d"/>
<rect x="753.0" y="296.3" width="8.5" height="18.4" fill="#2b778e"/>
<rect x="761.0" y="296.3" width="20.5" height="18.4" fill="#423d83"/>
</g>
<g filter="url(#bl2)">
<rect x="357.0" y="230.8" width="2" height="76" fill="#a8e050" opacity="0.08"/>
<rect x="363.0" y="230.8" width="1" height="76" fill="#a8e050" opacity="0.04"/>
<rect x="367.0" y="230.8" width="1" height="76" fill="#a8e050" opacity="0.07"/>
<rect x="374.0" y="230.8" width="1" height="76" fill="#3b2a78" opacity="0.06"/>
<rect x="378.5" y="230.8" width="2" height="76" fill="#a8e050" opacity="0.05"/>
<rect x="381.5" y="230.8" width="1.5" height="76" fill="#a8e050" opacity="0.09"/>
<rect x="385.0" y="230.8" width="1.5" height="76" fill="#a8e050" opacity="0.08"/>
<rect x="387.0" y="230.8" width="1.5" height="76" fill="#a8e050" opacity="0.05"/>
<rect x="390.0" y="230.8" width="1" height="76" fill="#3b2a78" opacity="0.12"/>
<rect x="397.5" y="230.8" width="1" height="76" fill="#3b2a78" opacity="0.14"/>
<rect x="404.5" y="230.8" width="2" height="76" fill="#3b2a78" opacity="0.11"/>
<rect x="408.0" y="230.8" width="1.5" height="76" fill="#3b2a78" opacity="0.08"/>
<rect x="411.5" y="230.8" width="1" height="76" fill="#3b2a78" opacity="0.12"/>
<rect x="413.0" y="230.8" width="1" height="76" fill="#a8e050" opacity="0.07"/>
<rect x="417.0" y="230.8" width="1" height="76" fill="#a8e050" opacity="0.05"/>
<rect x="421.5" y="230.8" width="2" height="76" fill="#a8e050" opacity="0.05"/>
<rect x="427.0" y="230.8" width="1" height="76" fill="#3b2a78" opacity="0.15"/>
<rect x="431.0" y="230.8" width="1" height="76" fill="#3b2a78" opacity="0.06"/>
<rect x="434.0" y="230.8" width="1.5" height="76" fill="#3b2a78" opacity="0.11"/>
<rect x="437.0" y="230.8" width="2" height="76" fill="#3b2a78" opacity="0.05"/>
<rect x="442.0" y="230.8" width="1" height="76" fill="#3b2a78" opacity="0.08"/>
<rect x="446.0" y="230.8" width="2" height="76" fill="#3b2a78" opacity="0.10"/>
<rect x="453.0" y="230.8" width="1" height="76" fill="#a8e050" opacity="0.05"/>
<rect x="466.0" y="230.8" width="1" height="76" fill="#3b2a78" opacity="0.04"/>
<rect x="471.5" y="230.8" width="1.5" height="76" fill="#a8e050" opacity="0.11"/>
<rect x="475.0" y="230.8" width="1.5" height="76" fill="#a8e050" opacity="0.11"/>
<rect x="477.0" y="230.8" width="1" height="76" fill="#3b2a78" opacity="0.10"/>
<rect x="481.0" y="230.8" width="1" height="76" fill="#3b2a78" opacity="0.14"/>
<rect x="483.0" y="230.8" width="1" height="76" fill="#3b2a78" opacity="0.09"/>
<rect x="485.0" y="230.8" width="1" height="76" fill="#3b2a78" opacity="0.07"/>
<rect x="489.0" y="230.8" width="1" height="76" fill="#3b2a78" opacity="0.06"/>
<rect x="496.5" y="230.8" width="1" height="76" fill="#a8e050" opacity="0.11"/>
<rect x="501.5" y="230.8" width="1" height="76" fill="#a8e050" opacity="0.04"/>
<rect x="503.0" y="230.8" width="1.5" height="76" fill="#a8e050" opacity="0.12"/>
<rect x="505.0" y="230.8" width="2" height="76" fill="#a8e050" opacity="0.10"/>
<rect x="508.0" y="230.8" width="1.5" height="76" fill="#a8e050" opacity="0.09"/>
<rect x="512.5" y="230.8" width="2" height="76" fill="#a8e050" opacity="0.09"/>
<rect x="516.5" y="230.8" width="2" height="76" fill="#a8e050" opacity="0.08"/>
<rect x="525.5" y="230.8" width="2" height="76" fill="#a8e050" opacity="0.11"/>
<rect x="528.0" y="230.8" width="1" height="76" fill="#a8e050" opacity="0.04"/>
<rect x="538.0" y="230.8" width="1.5" height="76" fill="#3b2a78" opacity="0.11"/>
<rect x="545.0" y="230.8" width="2" height="76" fill="#a8e050" opacity="0.05"/>
<rect x="549.0" y="230.8" width="1.5" height="76" fill="#3b2a78" opacity="0.09"/>
<rect x="551.5" y="230.8" width="1" height="76" fill="#a8e050" opacity="0.08"/>
<rect x="554.0" y="230.8" width="1" height="76" fill="#3b2a78" opacity="0.09"/>
<rect x="558.0" y="230.8" width="1" height="76" fill="#3b2a78" opacity="0.09"/>
<rect x="560.0" y="230.8" width="2" height="76" fill="#a8e050" opacity="0.08"/>
<rect x="563.5" y="230.8" width="2" height="76" fill="#a8e050" opacity="0.10"/>
<rect x="569.5" y="230.8" width="1.5" height="76" fill="#a8e050" opacity="0.10"/>
<rect x="571.5" y="230.8" width="1" height="76" fill="#a8e050" opacity="0.05"/>
<rect x="575.5" y="230.8" width="1" height="76" fill="#a8e050" opacity="0.09"/>
<rect x="580.0" y="230.8" width="2" height="76" fill="#3b2a78" opacity="0.12"/>
<rect x="584.0" y="230.8" width="1" height="76" fill="#3b2a78" opacity="0.07"/>
<rect x="586.5" y="230.8" width="1" height="76" fill="#a8e050" opacity="0.10"/>
<rect x="588.5" y="230.8" width="1" height="76" fill="#a8e050" opacity="0.11"/>
<rect x="591.5" y="230.8" width="1" height="76" fill="#a8e050" opacity="0.05"/>
<rect x="593.0" y="230.8" width="2" height="76" fill="#a8e050" opacity="0.09"/>
<rect x="598.0" y="230.8" width="1.5" height="76" fill="#a8e050" opacity="0.09"/>
<rect x="602.0" y="230.8" width="1" height="76" fill="#3b2a78" opacity="0.08"/>
<rect x="603.5" y="230.8" width="1.5" height="76" fill="#a8e050" opacity="0.10"/>
<rect x="608.5" y="230.8" width="1.5" height="76" fill="#a8e050" opacity="0.03"/>
<rect x="615.5" y="230.8" width="1" height="76" fill="#3b2a78" opacity="0.14"/>
<rect x="618.5" y="230.8" width="1" height="76" fill="#3b2a78" opacity="0.08"/>
<rect x="620.5" y="230.8" width="2" height="76" fill="#3b2a78" opacity="0.10"/>
<rect x="637.0" y="230.8" width="1" height="76" fill="#a8e050" opacity="0.11"/>
<rect x="641.0" y="230.8" width="1.5" height="76" fill="#a8e050" opacity="0.06"/>
<rect x="645.5" y="230.8" width="1" height="76" fill="#a8e050" opacity="0.04"/>
<rect x="649.5" y="230.8" width="1.5" height="76" fill="#a8e050" opacity="0.05"/>
<rect x="654.0" y="230.8" width="1" height="76" fill="#a8e050" opacity="0.08"/>
<rect x="655.5" y="230.8" width="1" height="76" fill="#a8e050" opacity="0.07"/>
<rect x="659.5" y="230.8" width="1" height="76" fill="#a8e050" opacity="0.09"/>
<rect x="661.0" y="230.8" width="2" height="76" fill="#a8e050" opacity="0.12"/>
<rect x="665.0" y="230.8" width="1.5" height="76" fill="#3b2a78" opacity="0.09"/>
<rect x="672.0" y="230.8" width="1.5" height="76" fill="#3b2a78" opacity="0.09"/>
<rect x="674.0" y="230.8" width="1.5" height="76" fill="#3b2a78" opacity="0.13"/>
<rect x="676.0" y="230.8" width="1" height="76" fill="#3b2a78" opacity="0.06"/>
<rect x="681.0" y="230.8" width="2" height="76" fill="#3b2a78" opacity="0.12"/>
<rect x="688.0" y="230.8" width="2" height="76" fill="#3b2a78" opacity="0.11"/>
<rect x="693.0" y="230.8" width="1" height="76" fill="#a8e050" opacity="0.11"/>
<rect x="697.0" y="230.8" width="1" height="76" fill="#a8e050" opacity="0.11"/>
<rect x="701.0" y="230.8" width="1" height="76" fill="#3b2a78" opacity="0.12"/>
<rect x="703.5" y="230.8" width="1" height="76" fill="#a8e050" opacity="0.06"/>
<rect x="707.5" y="230.8" width="1" height="76" fill="#3b2a78" opacity="0.07"/>
<rect x="709.0" y="230.8" width="1.5" height="76" fill="#a8e050" opacity="0.07"/>
<rect x="712.5" y="230.8" width="1" height="76" fill="#3b2a78" opacity="0.11"/>
<rect x="714.0" y="230.8" width="1" height="76" fill="#3b2a78" opacity="0.12"/>
<rect x="722.0" y="230.8" width="1" height="76" fill="#3b2a78" opacity="0.12"/>
<rect x="726.0" y="230.8" width="2" height="76" fill="#3b2a78" opacity="0.06"/>
<rect x="731.5" y="230.8" width="1" height="76" fill="#a8e050" opacity="0.04"/>
<rect x="737.0" y="230.8" width="2" height="76" fill="#a8e050" opacity="0.08"/>
<rect x="744.5" y="230.8" width="2" height="76" fill="#a8e050" opacity="0.10"/>
<rect x="750.0" y="230.8" width="1" height="76" fill="#a8e050" opacity="0.04"/>
<rect x="753.0" y="230.8" width="1" height="76" fill="#a8e050" opacity="0.12"/>
<rect x="758.0" y="230.8" width="2" height="76" fill="#3b2a78" opacity="0.08"/>
</g>
<filter id="c1n1" x="0" y="0" width="100%" height="100%" color-interpolation-filters="sRGB"><feTurbulence type="fractalNoise" baseFrequency="0.26 0.045" numOctaves="2" seed="11"/><feColorMatrix type="matrix" values="0 0 0 0 0.47  0 0 0 0 0.82  0 0 0 0 0.36  1.5 0 0 0 -0.8"/></filter>
<rect x="353" y="232.8" width="410.4" height="71.4" filter="url(#c1n1)" opacity="0.4"/>
<filter id="c1n2" x="0" y="0" width="100%" height="100%" color-interpolation-filters="sRGB"><feTurbulence type="fractalNoise" baseFrequency="0.26 0.045" numOctaves="2" seed="11"/><feColorMatrix type="matrix" values="0 0 0 0 0.22  0 0 0 0 0.14  0 0 0 0 0.46  -1.5 0 0 0 0.72"/></filter>
<rect x="353" y="232.8" width="410.4" height="71.4" filter="url(#c1n2)" opacity="0.45"/>
<filter id="c1n3" x="0" y="0" width="100%" height="100%" color-interpolation-filters="sRGB"><feTurbulence type="fractalNoise" baseFrequency="0.06 0.30" numOctaves="2" seed="12"/><feColorMatrix type="matrix" values="0 0 0 0 0.47  0 0 0 0 0.82  0 0 0 0 0.36  1.7 0 0 0 -0.88"/></filter>
<rect x="353" y="232.8" width="410.4" height="71.4" filter="url(#c1n3)" opacity="0.8"/>
<filter id="c1n4" x="0" y="0" width="100%" height="100%" color-interpolation-filters="sRGB"><feTurbulence type="fractalNoise" baseFrequency="0.06 0.30" numOctaves="2" seed="12"/><feColorMatrix type="matrix" values="0 0 0 0 0.22  0 0 0 0 0.14  0 0 0 0 0.46  -1.7 0 0 0 0.8"/></filter>
<rect x="353" y="232.8" width="410.4" height="71.4" filter="url(#c1n4)" opacity="0.55"/>
<g>
</g></g>
<g clip-path="url(#c2)">
<rect x="345" y="330.2" width="430" height="92" fill="#26838e"/>
<g filter="url(#bl)">
<rect x="343.0" y="330.2" width="18.5" height="18.4" fill="#3e4a89"/>
<rect x="361.0" y="330.2" width="8.5" height="18.4" fill="#22a187"/>
<rect x="369.0" y="330.2" width="8.5" height="18.4" fill="#22a187"/>
<rect x="377.0" y="330.2" width="8.5" height="18.4" fill="#22908c"/>
<rect x="385.0" y="330.2" width="8.5" height="18.4" fill="#2e6e8e"/>
<rect x="393.0" y="330.2" width="8.5" height="18.4" fill="#30b17d"/>
<rect x="401.0" y="330.2" width="8.5" height="18.4" fill="#30b17d"/>
<rect x="409.0" y="330.2" width="8.5" height="18.4" fill="#30b17d"/>
<rect x="417.0" y="330.2" width="8.5" height="18.4" fill="#2e6e8e"/>
<rect x="425.0" y="330.2" width="8.5" height="18.4" fill="#22908c"/>
<rect x="433.0" y="330.2" width="8.5" height="18.4" fill="#22908c"/>
<rect x="441.0" y="330.2" width="8.5" height="18.4" fill="#277f8e"/>
<rect x="449.0" y="330.2" width="8.5" height="18.4" fill="#277f8e"/>
<rect x="457.0" y="330.2" width="8.5" height="18.4" fill="#2e6e8e"/>
<rect x="465.0" y="330.2" width="8.5" height="18.4" fill="#22908c"/>
<rect x="473.0" y="330.2" width="8.5" height="18.4" fill="#22a187"/>
<rect x="343.0" y="348.1" width="18.5" height="8.4" fill="#2e6e8e"/>
<rect x="361.0" y="348.1" width="8.5" height="8.4" fill="#22908c"/>
<rect x="369.0" y="348.1" width="8.5" height="8.4" fill="#22a187"/>
<rect x="377.0" y="348.1" width="8.5" height="8.4" fill="#30b17d"/>
<rect x="385.0" y="348.1" width="8.5" height="8.4" fill="#2e6e8e"/>
<rect x="393.0" y="348.1" width="8.5" height="8.4" fill="#22908c"/>
<rect x="401.0" y="348.1" width="8.5" height="8.4" fill="#4abf6d"/>
<rect x="409.0" y="348.1" width="8.5" height="8.4" fill="#22a187"/>
<rect x="417.0" y="348.1" width="8.5" height="8.4" fill="#2e6e8e"/>
<rect x="425.0" y="348.1" width="8.5" height="8.4" fill="#277f8e"/>
<rect x="433.0" y="348.1" width="8.5" height="8.4" fill="#277f8e"/>
<rect x="441.0" y="348.1" width="8.5" height="8.4" fill="#277f8e"/>
<rect x="449.0" y="348.1" width="8.5" height="8.4" fill="#2e6e8e"/>
<rect x="457.0" y="348.1" width="8.5" height="8.4" fill="#2e6e8e"/>
<rect x="465.0" y="348.1" width="8.5" height="8.4" fill="#22908c"/>
<rect x="473.0" y="348.1" width="8.5" height="8.4" fill="#22908c"/>
<rect x="343.0" y="356.1" width="18.5" height="8.4" fill="#2e6e8e"/>
<rect x="361.0" y="356.1" width="8.5" height="8.4" fill="#22908c"/>
<rect x="369.0" y="356.1" width="8.5" height="8.4" fill="#22908c"/>
<rect x="377.0" y="356.1" width="8.5" height="8.4" fill="#4abf6d"/>
<rect x="385.0" y="356.1" width="8.5" height="8.4" fill="#2e6e8e"/>
<rect x="393.0" y="356.1" width="8.5" height="8.4" fill="#22908c"/>
<rect x="401.0" y="356.1" width="8.5" height="8.4" fill="#4abf6d"/>
<rect x="409.0" y="356.1" width="8.5" height="8.4" fill="#22908c"/>
<rect x="417.0" y="356.1" width="8.5" height="8.4" fill="#2e6e8e"/>
<rect x="425.0" y="356.1" width="8.5" height="8.4" fill="#277f8e"/>
<rect x="433.0" y="356.1" width="8.5" height="8.4" fill="#277f8e"/>
<rect x="441.0" y="356.1" width="8.5" height="8.4" fill="#2e6e8e"/>
<rect x="449.0" y="356.1" width="8.5" height="8.4" fill="#2e6e8e"/>
<rect x="457.0" y="356.1" width="8.5" height="8.4" fill="#2e6e8e"/>
<rect x="465.0" y="356.1" width="8.5" height="8.4" fill="#22908c"/>
<rect x="473.0" y="356.1" width="8.5" height="8.4" fill="#22908c"/>
<rect x="343.0" y="364.0" width="18.5" height="8.4" fill="#2e6e8e"/>
<rect x="361.0" y="364.0" width="8.5" height="8.4" fill="#22a187"/>
<rect x="369.0" y="364.0" width="8.5" height="8.4" fill="#22908c"/>
<rect x="377.0" y="364.0" width="8.5" height="8.4" fill="#4abf6d"/>
<rect x="385.0" y="364.0" width="8.5" height="8.4" fill="#2e6e8e"/>
<rect x="393.0" y="364.0" width="8.5" height="8.4" fill="#22908c"/>
<rect x="401.0" y="364.0" width="8.5" height="8.4" fill="#30b17d"/>
<rect x="409.0" y="364.0" width="8.5" height="8.4" fill="#22908c"/>
<rect x="417.0" y="364.0" width="8.5" height="8.4" fill="#2e6e8e"/>
<rect x="425.0" y="364.0" width="8.5" height="8.4" fill="#277f8e"/>
<rect x="433.0" y="364.0" width="8.5" height="8.4" fill="#277f8e"/>
<rect x="441.0" y="364.0" width="8.5" height="8.4" fill="#2e6e8e"/>
<rect x="449.0" y="364.0" width="8.5" height="8.4" fill="#2e6e8e"/>
<rect x="457.0" y="364.0" width="8.5" height="8.4" fill="#2e6e8e"/>
<rect x="465.0" y="364.0" width="8.5" height="8.4" fill="#22908c"/>
<rect x="473.0" y="364.0" width="8.5" height="8.4" fill="#22a187"/>
<rect x="343.0" y="371.9" width="18.5" height="8.4" fill="#277f8e"/>
<rect x="361.0" y="371.9" width="8.5" height="8.4" fill="#30b17d"/>
<rect x="369.0" y="371.9" width="8.5" height="8.4" fill="#30b17d"/>
<rect x="377.0" y="371.9" width="8.5" height="8.4" fill="#30b17d"/>
<rect x="385.0" y="371.9" width="8.5" height="8.4" fill="#2e6e8e"/>
<rect x="393.0" y="371.9" width="8.5" height="8.4" fill="#30b17d"/>
<rect x="401.0" y="371.9" width="8.5" height="8.4" fill="#22a187"/>
<rect x="409.0" y="371.9" width="8.5" height="8.4" fill="#30b17d"/>
<rect x="417.0" y="371.9" width="8.5" height="8.4" fill="#2e6e8e"/>
<rect x="425.0" y="371.9" width="8.5" height="8.4" fill="#22908c"/>
<rect x="433.0" y="371.9" width="8.5" height="8.4" fill="#277f8e"/>
<rect x="441.0" y="371.9" width="8.5" height="8.4" fill="#277f8e"/>
<rect x="449.0" y="371.9" width="8.5" height="8.4" fill="#277f8e"/>
<rect x="457.0" y="371.9" width="8.5" height="8.4" fill="#2e6e8e"/>
<rect x="465.0" y="371.9" width="8.5" height="8.4" fill="#22908c"/>
<rect x="473.0" y="371.9" width="8.5" height="8.4" fill="#4abf6d"/>
<rect x="343.0" y="379.9" width="18.5" height="8.4" fill="#22908c"/>
<rect x="361.0" y="379.9" width="8.5" height="8.4" fill="#6dcd59"/>
<rect x="369.0" y="379.9" width="8.5" height="8.4" fill="#6dcd59"/>
<rect x="377.0" y="379.9" width="8.5" height="8.4" fill="#30b17d"/>
<rect x="385.0" y="379.9" width="8.5" height="8.4" fill="#2e6e8e"/>
<rect x="393.0" y="379.9" width="8.5" height="8.4" fill="#6dcd59"/>
<rect x="401.0" y="379.9" width="8.5" height="8.4" fill="#4abf6d"/>
<rect x="409.0" y="379.9" width="8.5" height="8.4" fill="#4abf6d"/>
<rect x="417.0" y="379.9" width="8.5" height="8.4" fill="#2e6e8e"/>
<rect x="425.0" y="379.9" width="8.5" height="8.4" fill="#30b17d"/>
<rect x="433.0" y="379.9" width="8.5" height="8.4" fill="#22908c"/>
<rect x="441.0" y="379.9" width="8.5" height="8.4" fill="#22908c"/>
<rect x="449.0" y="379.9" width="8.5" height="8.4" fill="#277f8e"/>
<rect x="457.0" y="379.9" width="8.5" height="8.4" fill="#2e6e8e"/>
<rect x="465.0" y="379.9" width="8.5" height="8.4" fill="#22a187"/>
<rect x="473.0" y="379.9" width="8.5" height="8.4" fill="#6dcd59"/>
<rect x="343.0" y="387.8" width="18.5" height="8.4" fill="#22908c"/>
<rect x="361.0" y="387.8" width="8.5" height="8.4" fill="#bbdf2b"/>
<rect x="369.0" y="387.8" width="8.5" height="8.4" fill="#99d83d"/>
<rect x="377.0" y="387.8" width="8.5" height="8.4" fill="#30b17d"/>
<rect x="385.0" y="387.8" width="8.5" height="8.4" fill="#2e6e8e"/>
<rect x="393.0" y="387.8" width="8.5" height="8.4" fill="#99d83d"/>
<rect x="401.0" y="387.8" width="8.5" height="8.4" fill="#6dcd59"/>
<rect x="409.0" y="387.8" width="8.5" height="8.4" fill="#4abf6d"/>
<rect x="417.0" y="387.8" width="8.5" height="8.4" fill="#2e6e8e"/>
<rect x="425.0" y="387.8" width="8.5" height="8.4" fill="#30b17d"/>
<rect x="433.0" y="387.8" width="8.5" height="8.4" fill="#22908c"/>
<rect x="441.0" y="387.8" width="8.5" height="8.4" fill="#22908c"/>
<rect x="449.0" y="387.8" width="8.5" height="8.4" fill="#277f8e"/>
<rect x="457.0" y="387.8" width="8.5" height="8.4" fill="#2e6e8e"/>
<rect x="465.0" y="387.8" width="8.5" height="8.4" fill="#22a187"/>
<rect x="473.0" y="387.8" width="8.5" height="8.4" fill="#6dcd59"/>
<rect x="343.0" y="395.7" width="18.5" height="8.4" fill="#22908c"/>
<rect x="361.0" y="395.7" width="8.5" height="8.4" fill="#bbdf2b"/>
<rect x="369.0" y="395.7" width="8.5" height="8.4" fill="#99d83d"/>
<rect x="377.0" y="395.7" width="8.5" height="8.4" fill="#30b17d"/>
<rect x="385.0" y="395.7" width="8.5" height="8.4" fill="#2e6e8e"/>
<rect x="393.0" y="395.7" width="8.5" height="8.4" fill="#6dcd59"/>
<rect x="401.0" y="395.7" width="8.5" height="8.4" fill="#4abf6d"/>
<rect x="409.0" y="395.7" width="8.5" height="8.4" fill="#30b17d"/>
<rect x="417.0" y="395.7" width="8.5" height="8.4" fill="#277f8e"/>
<rect x="425.0" y="395.7" width="8.5" height="8.4" fill="#22a187"/>
<rect x="433.0" y="395.7" width="8.5" height="8.4" fill="#22908c"/>
<rect x="441.0" y="395.7" width="8.5" height="8.4" fill="#22908c"/>
<rect x="449.0" y="395.7" width="8.5" height="8.4" fill="#277f8e"/>
<rect x="457.0" y="395.7" width="8.5" height="8.4" fill="#277f8e"/>
<rect x="465.0" y="395.7" width="8.5" height="8.4" fill="#30b17d"/>
<rect x="473.0" y="395.7" width="8.5" height="8.4" fill="#99d83d"/>
<rect x="343.0" y="403.7" width="18.5" height="18.4" fill="#22908c"/>
<rect x="361.0" y="403.7" width="8.5" height="18.4" fill="#bbdf2b"/>
<rect x="369.0" y="403.7" width="8.5" height="18.4" fill="#99d83d"/>
<rect x="377.0" y="403.7" width="8.5" height="18.4" fill="#30b17d"/>
<rect x="385.0" y="403.7" width="8.5" height="18.4" fill="#2e6e8e"/>
<rect x="393.0" y="403.7" width="8.5" height="18.4" fill="#4abf6d"/>
<rect x="401.0" y="403.7" width="8.5" height="18.4" fill="#30b17d"/>
<rect x="409.0" y="403.7" width="8.5" height="18.4" fill="#22a187"/>
<rect x="417.0" y="403.7" width="8.5" height="18.4" fill="#277f8e"/>
<rect x="425.0" y="403.7" width="8.5" height="18.4" fill="#22a187"/>
<rect x="433.0" y="403.7" width="8.5" height="18.4" fill="#22908c"/>
<rect x="441.0" y="403.7" width="8.5" height="18.4" fill="#22908c"/>
<rect x="449.0" y="403.7" width="8.5" height="18.4" fill="#277f8e"/>
<rect x="457.0" y="403.7" width="8.5" height="18.4" fill="#277f8e"/>
<rect x="465.0" y="403.7" width="8.5" height="18.4" fill="#4abf6d"/>
<rect x="473.0" y="403.7" width="8.5" height="18.4" fill="#bbdf2b"/>
<rect x="481.0" y="330.2" width="8.5" height="18.4" fill="#277f8e"/>
<rect x="489.0" y="330.2" width="8.5" height="18.4" fill="#22a187"/>
<rect x="497.0" y="330.2" width="8.5" height="18.4" fill="#22908c"/>
<rect x="505.0" y="330.2" width="8.5" height="18.4" fill="#22908c"/>
<rect x="513.0" y="330.2" width="8.5" height="18.4" fill="#22908c"/>
<rect x="521.0" y="330.2" width="8.5" height="18.4" fill="#22a187"/>
<rect x="529.0" y="330.2" width="8.5" height="18.4" fill="#277f8e"/>
<rect x="537.0" y="330.2" width="8.5" height="18.4" fill="#365d8c"/>
<rect x="545.0" y="330.2" width="8.5" height="18.4" fill="#22a187"/>
<rect x="553.0" y="330.2" width="8.5" height="18.4" fill="#30b17d"/>
<rect x="561.0" y="330.2" width="8.5" height="18.4" fill="#22a187"/>
<rect x="569.0" y="330.2" width="8.5" height="18.4" fill="#30b17d"/>
<rect x="577.0" y="330.2" width="8.5" height="18.4" fill="#22a187"/>
<rect x="585.0" y="330.2" width="8.5" height="18.4" fill="#22a187"/>
<rect x="593.0" y="330.2" width="8.5" height="18.4" fill="#22a187"/>
<rect x="601.0" y="330.2" width="8.5" height="18.4" fill="#2e6e8e"/>
<rect x="481.0" y="348.1" width="8.5" height="8.4" fill="#277f8e"/>
<rect x="489.0" y="348.1" width="8.5" height="8.4" fill="#22a187"/>
<rect x="497.0" y="348.1" width="8.5" height="8.4" fill="#22a187"/>
<rect x="505.0" y="348.1" width="8.5" height="8.4" fill="#22908c"/>
<rect x="513.0" y="348.1" width="8.5" height="8.4" fill="#22908c"/>
<rect x="521.0" y="348.1" width="8.5" height="8.4" fill="#30b17d"/>
<rect x="529.0" y="348.1" width="8.5" height="8.4" fill="#277f8e"/>
<rect x="537.0" y="348.1" width="8.5" height="8.4" fill="#365d8c"/>
<rect x="545.0" y="348.1" width="8.5" height="8.4" fill="#30b17d"/>
<rect x="553.0" y="348.1" width="8.5" height="8.4" fill="#30b17d"/>
<rect x="561.0" y="348.1" width="8.5" height="8.4" fill="#22908c"/>
<rect x="569.0" y="348.1" width="8.5" height="8.4" fill="#30b17d"/>
<rect x="577.0" y="348.1" width="8.5" height="8.4" fill="#22a187"/>
<rect x="585.0" y="348.1" width="8.5" height="8.4" fill="#277f8e"/>
<rect x="593.0" y="348.1" width="8.5" height="8.4" fill="#22908c"/>
<rect x="601.0" y="348.1" width="8.5" height="8.4" fill="#2e6e8e"/>
<rect x="481.0" y="356.1" width="8.5" height="8.4" fill="#277f8e"/>
<rect x="489.0" y="356.1" width="8.5" height="8.4" fill="#22908c"/>
<rect x="497.0" y="356.1" width="8.5" height="8.4" fill="#30b17d"/>
<rect x="505.0" y="356.1" width="8.5" height="8.4" fill="#22a187"/>
<rect x="513.0" y="356.1" width="8.5" height="8.4" fill="#22908c"/>
<rect x="521.0" y="356.1" width="8.5" height="8.4" fill="#22a187"/>
<rect x="529.0" y="356.1" width="8.5" height="8.4" fill="#277f8e"/>
<rect x="537.0" y="356.1" width="8.5" height="8.4" fill="#365d8c"/>
<rect x="545.0" y="356.1" width="8.5" height="8.4" fill="#30b17d"/>
<rect x="553.0" y="356.1" width="8.5" height="8.4" fill="#22a187"/>
<rect x="561.0" y="356.1" width="8.5" height="8.4" fill="#277f8e"/>
<rect x="569.0" y="356.1" width="8.5" height="8.4" fill="#22a187"/>
<rect x="577.0" y="356.1" width="8.5" height="8.4" fill="#22908c"/>
<rect x="585.0" y="356.1" width="8.5" height="8.4" fill="#2e6e8e"/>
<rect x="593.0" y="356.1" width="8.5" height="8.4" fill="#277f8e"/>
<rect x="601.0" y="356.1" width="8.5" height="8.4" fill="#2e6e8e"/>
<rect x="481.0" y="364.0" width="8.5" height="8.4" fill="#277f8e"/>
<rect x="489.0" y="364.0" width="8.5" height="8.4" fill="#22908c"/>
<rect x="497.0" y="364.0" width="8.5" height="8.4" fill="#4abf6d"/>
<rect x="505.0" y="364.0" width="8.5" height="8.4" fill="#22a187"/>
<rect x="513.0" y="364.0" width="8.5" height="8.4" fill="#22908c"/>
<rect x="521.0" y="364.0" width="8.5" height="8.4" fill="#22a187"/>
<rect x="529.0" y="364.0" width="8.5" height="8.4" fill="#277f8e"/>
<rect x="537.0" y="364.0" width="8.5" height="8.4" fill="#365d8c"/>
<rect x="545.0" y="364.0" width="8.5" height="8.4" fill="#22908c"/>
<rect x="553.0" y="364.0" width="8.5" height="8.4" fill="#22908c"/>
<rect x="561.0" y="364.0" width="8.5" height="8.4" fill="#277f8e"/>
<rect x="569.0" y="364.0" width="8.5" height="8.4" fill="#22a187"/>
<rect x="577.0" y="364.0" width="8.5" height="8.4" fill="#22908c"/>
<rect x="585.0" y="364.0" width="8.5" height="8.4" fill="#2e6e8e"/>
<rect x="593.0" y="364.0" width="8.5" height="8.4" fill="#277f8e"/>
<rect x="601.0" y="364.0" width="8.5" height="8.4" fill="#2e6e8e"/>
<rect x="481.0" y="371.9" width="8.5" height="8.4" fill="#22908c"/>
<rect x="489.0" y="371.9" width="8.5" height="8.4" fill="#22a187"/>
<rect x="497.0" y="371.9" width="8.5" height="8.4" fill="#30b17d"/>
<rect x="505.0" y="371.9" width="8.5" height="8.4" fill="#30b17d"/>
<rect x="513.0" y="371.9" width="8.5" height="8.4" fill="#22a187"/>
<rect x="521.0" y="371.9" width="8.5" height="8.4" fill="#22a187"/>
<rect x="529.0" y="371.9" width="8.5" height="8.4" fill="#277f8e"/>
<rect x="537.0" y="371.9" width="8.5" height="8.4" fill="#365d8c"/>
<rect x="545.0" y="371.9" width="8.5" height="8.4" fill="#22908c"/>
<rect x="553.0" y="371.9" width="8.5" height="8.4" fill="#277f8e"/>
<rect x="561.0" y="371.9" width="8.5" height="8.4" fill="#277f8e"/>
<rect x="569.0" y="371.9" width="8.5" height="8.4" fill="#22908c"/>
<rect x="577.0" y="371.9" width="8.5" height="8.4" fill="#22908c"/>
<rect x="585.0" y="371.9" width="8.5" height="8.4" fill="#2e6e8e"/>
<rect x="593.0" y="371.9" width="8.5" height="8.4" fill="#22908c"/>
<rect x="601.0" y="371.9" width="8.5" height="8.4" fill="#2e6e8e"/>
<rect x="481.0" y="379.9" width="8.5" height="8.4" fill="#30b17d"/>
<rect x="489.0" y="379.9" width="8.5" height="8.4" fill="#6dcd59"/>
<rect x="497.0" y="379.9" width="8.5" height="8.4" fill="#30b17d"/>
<rect x="505.0" y="379.9" width="8.5" height="8.4" fill="#30b17d"/>
<rect x="513.0" y="379.9" width="8.5" height="8.4" fill="#30b17d"/>
<rect x="521.0" y="379.9" width="8.5" height="8.4" fill="#30b17d"/>
<rect x="529.0" y="379.9" width="8.5" height="8.4" fill="#277f8e"/>
<rect x="537.0" y="379.9" width="8.5" height="8.4" fill="#365d8c"/>
<rect x="545.0" y="379.9" width="8.5" height="8.4" fill="#22908c"/>
<rect x="553.0" y="379.9" width="8.5" height="8.4" fill="#22908c"/>
<rect x="561.0" y="379.9" width="8.5" height="8.4" fill="#277f8e"/>
<rect x="569.0" y="379.9" width="8.5" height="8.4" fill="#22908c"/>
<rect x="577.0" y="379.9" width="8.5" height="8.4" fill="#22908c"/>
<rect x="585.0" y="379.9" width="8.5" height="8.4" fill="#277f8e"/>
<rect x="593.0" y="379.9" width="8.5" height="8.4" fill="#22a187"/>
<rect x="601.0" y="379.9" width="8.5" height="8.4" fill="#2e6e8e"/>
<rect x="481.0" y="387.8" width="8.5" height="8.4" fill="#6dcd59"/>
<rect x="489.0" y="387.8" width="8.5" height="8.4" fill="#99d83d"/>
<rect x="497.0" y="387.8" width="8.5" height="8.4" fill="#4abf6d"/>
<rect x="505.0" y="387.8" width="8.5" height="8.4" fill="#4abf6d"/>
<rect x="513.0" y="387.8" width="8.5" height="8.4" fill="#30b17d"/>
<rect x="521.0" y="387.8" width="8.5" height="8.4" fill="#30b17d"/>
<rect x="529.0" y="387.8" width="8.5" height="8.4" fill="#277f8e"/>
<rect x="537.0" y="387.8" width="8.5" height="8.4" fill="#365d8c"/>
<rect x="545.0" y="387.8" width="8.5" height="8.4" fill="#4abf6d"/>
<rect x="553.0" y="387.8" width="8.5" height="8.4" fill="#30b17d"/>
<rect x="561.0" y="387.8" width="8.5" height="8.4" fill="#22908c"/>
<rect x="569.0" y="387.8" width="8.5" height="8.4" fill="#4abf6d"/>
<rect x="577.0" y="387.8" width="8.5" height="8.4" fill="#30b17d"/>
<rect x="585.0" y="387.8" width="8.5" height="8.4" fill="#22908c"/>
<rect x="593.0" y="387.8" width="8.5" height="8.4" fill="#4abf6d"/>
<rect x="601.0" y="387.8" width="8.5" height="8.4" fill="#22908c"/>
<rect x="481.0" y="395.7" width="8.5" height="8.4" fill="#4abf6d"/>
<rect x="489.0" y="395.7" width="8.5" height="8.4" fill="#6dcd59"/>
<rect x="497.0" y="395.7" width="8.5" height="8.4" fill="#4abf6d"/>
<rect x="505.0" y="395.7" width="8.5" height="8.4" fill="#30b17d"/>
<rect x="513.0" y="395.7" width="8.5" height="8.4" fill="#22a187"/>
<rect x="521.0" y="395.7" width="8.5" height="8.4" fill="#30b17d"/>
<rect x="529.0" y="395.7" width="8.5" height="8.4" fill="#277f8e"/>
<rect x="537.0" y="395.7" width="8.5" height="8.4" fill="#365d8c"/>
<rect x="545.0" y="395.7" width="8.5" height="8.4" fill="#4abf6d"/>
<rect x="553.0" y="395.7" width="8.5" height="8.4" fill="#22908c"/>
<rect x="561.0" y="395.7" width="8.5" height="8.4" fill="#277f8e"/>
<rect x="569.0" y="395.7" width="8.5" height="8.4" fill="#30b17d"/>
<rect x="577.0" y="395.7" width="8.5" height="8.4" fill="#22a187"/>
<rect x="585.0" y="395.7" width="8.5" height="8.4" fill="#22908c"/>
<rect x="593.0" y="395.7" width="8.5" height="8.4" fill="#30b17d"/>
<rect x="601.0" y="395.7" width="8.5" height="8.4" fill="#22908c"/>
<rect x="481.0" y="403.7" width="8.5" height="18.4" fill="#4abf6d"/>
<rect x="489.0" y="403.7" width="8.5" height="18.4" fill="#4abf6d"/>
<rect x="497.0" y="403.7" width="8.5" height="18.4" fill="#30b17d"/>
<rect x="505.0" y="403.7" width="8.5" height="18.4" fill="#30b17d"/>
<rect x="513.0" y="403.7" width="8.5" height="18.4" fill="#22908c"/>
<rect x="521.0" y="403.7" width="8.5" height="18.4" fill="#4abf6d"/>
<rect x="529.0" y="403.7" width="8.5" height="18.4" fill="#277f8e"/>
<rect x="537.0" y="403.7" width="8.5" height="18.4" fill="#365d8c"/>
<rect x="545.0" y="403.7" width="8.5" height="18.4" fill="#bbdf2b"/>
<rect x="553.0" y="403.7" width="8.5" height="18.4" fill="#22908c"/>
<rect x="561.0" y="403.7" width="8.5" height="18.4" fill="#277f8e"/>
<rect x="569.0" y="403.7" width="8.5" height="18.4" fill="#4abf6d"/>
<rect x="577.0" y="403.7" width="8.5" height="18.4" fill="#22a187"/>
<rect x="585.0" y="403.7" width="8.5" height="18.4" fill="#22908c"/>
<rect x="593.0" y="403.7" width="8.5" height="18.4" fill="#30b17d"/>
<rect x="601.0" y="403.7" width="8.5" height="18.4" fill="#4abf6d"/>
<rect x="609.0" y="330.2" width="8.5" height="18.4" fill="#22908c"/>
<rect x="617.0" y="330.2" width="8.5" height="18.4" fill="#365d8c"/>
<rect x="625.0" y="330.2" width="8.5" height="18.4" fill="#2e6e8e"/>
<rect x="633.0" y="330.2" width="8.5" height="18.4" fill="#2e6e8e"/>
<rect x="641.0" y="330.2" width="8.5" height="18.4" fill="#3e4a89"/>
<rect x="649.0" y="330.2" width="8.5" height="18.4" fill="#30b17d"/>
<rect x="657.0" y="330.2" width="8.5" height="18.4" fill="#22908c"/>
<rect x="665.0" y="330.2" width="8.5" height="18.4" fill="#22908c"/>
<rect x="673.0" y="330.2" width="8.5" height="18.4" fill="#2e6e8e"/>
<rect x="681.0" y="330.2" width="8.5" height="18.4" fill="#277f8e"/>
<rect x="689.0" y="330.2" width="8.5" height="18.4" fill="#22a187"/>
<rect x="697.0" y="330.2" width="8.5" height="18.4" fill="#30b17d"/>
<rect x="705.0" y="330.2" width="8.5" height="18.4" fill="#22908c"/>
<rect x="713.0" y="330.2" width="8.5" height="18.4" fill="#22908c"/>
<rect x="721.0" y="330.2" width="8.5" height="18.4" fill="#22908c"/>
<rect x="729.0" y="330.2" width="8.5" height="18.4" fill="#22908c"/>
<rect x="609.0" y="348.1" width="8.5" height="8.4" fill="#277f8e"/>
<rect x="617.0" y="348.1" width="8.5" height="8.4" fill="#365d8c"/>
<rect x="625.0" y="348.1" width="8.5" height="8.4" fill="#2e6e8e"/>
<rect x="633.0" y="348.1" width="8.5" height="8.4" fill="#2e6e8e"/>
<rect x="641.0" y="348.1" width="8.5" height="8.4" fill="#365d8c"/>
<rect x="649.0" y="348.1" width="8.5" height="8.4" fill="#22a187"/>
<rect x="657.0" y="348.1" width="8.5" height="8.4" fill="#22908c"/>
<rect x="665.0" y="348.1" width="8.5" height="8.4" fill="#22a187"/>
<rect x="673.0" y="348.1" width="8.5" height="8.4" fill="#2e6e8e"/>
<rect x="681.0" y="348.1" width="8.5" height="8.4" fill="#2e6e8e"/>
<rect x="689.0" y="348.1" width="8.5" height="8.4" fill="#22908c"/>
<rect x="697.0" y="348.1" width="8.5" height="8.4" fill="#30b17d"/>
<rect x="705.0" y="348.1" width="8.5" height="8.4" fill="#22908c"/>
<rect x="713.0" y="348.1" width="8.5" height="8.4" fill="#22908c"/>
<rect x="721.0" y="348.1" width="8.5" height="8.4" fill="#22908c"/>
<rect x="729.0" y="348.1" width="8.5" height="8.4" fill="#22a187"/>
<rect x="609.0" y="356.1" width="8.5" height="8.4" fill="#277f8e"/>
<rect x="617.0" y="356.1" width="8.5" height="8.4" fill="#2e6e8e"/>
<rect x="625.0" y="356.1" width="8.5" height="8.4" fill="#2e6e8e"/>
<rect x="633.0" y="356.1" width="8.5" height="8.4" fill="#2e6e8e"/>
<rect x="641.0" y="356.1" width="8.5" height="8.4" fill="#365d8c"/>
<rect x="649.0" y="356.1" width="8.5" height="8.4" fill="#22908c"/>
<rect x="657.0" y="356.1" width="8.5" height="8.4" fill="#30b17d"/>
<rect x="665.0" y="356.1" width="8.5" height="8.4" fill="#99d83d"/>
<rect x="673.0" y="356.1" width="8.5" height="8.4" fill="#2e6e8e"/>
<rect x="681.0" y="356.1" width="8.5" height="8.4" fill="#2e6e8e"/>
<rect x="689.0" y="356.1" width="8.5" height="8.4" fill="#22908c"/>
<rect x="697.0" y="356.1" width="8.5" height="8.4" fill="#22a187"/>
<rect x="705.0" y="356.1" width="8.5" height="8.4" fill="#22908c"/>
<rect x="713.0" y="356.1" width="8.5" height="8.4" fill="#22908c"/>
<rect x="721.0" y="356.1" width="8.5" height="8.4" fill="#22908c"/>
<rect x="729.0" y="356.1" width="8.5" height="8.4" fill="#22a187"/>
<rect x="609.0" y="364.0" width="8.5" height="8.4" fill="#277f8e"/>
<rect x="617.0" y="364.0" width="8.5" height="8.4" fill="#2e6e8e"/>
<rect x="625.0" y="364.0" width="8.5" height="8.4" fill="#2e6e8e"/>
<rect x="633.0" y="364.0" width="8.5" height="8.4" fill="#2e6e8e"/>
<rect x="641.0" y="364.0" width="8.5" height="8.4" fill="#365d8c"/>
<rect x="649.0" y="364.0" width="8.5" height="8.4" fill="#22a187"/>
<rect x="657.0" y="364.0" width="8.5" height="8.4" fill="#6dcd59"/>
<rect x="665.0" y="364.0" width="8.5" height="8.4" fill="#bbdf2b"/>
<rect x="673.0" y="364.0" width="8.5" height="8.4" fill="#2e6e8e"/>
<rect x="681.0" y="364.0" width="8.5" height="8.4" fill="#2e6e8e"/>
<rect x="689.0" y="364.0" width="8.5" height="8.4" fill="#22908c"/>
<rect x="697.0" y="364.0" width="8.5" height="8.4" fill="#22908c"/>
<rect x="705.0" y="364.0" width="8.5" height="8.4" fill="#22908c"/>
<rect x="713.0" y="364.0" width="8.5" height="8.4" fill="#22908c"/>
<rect x="721.0" y="364.0" width="8.5" height="8.4" fill="#22a187"/>
<rect x="729.0" y="364.0" width="8.5" height="8.4" fill="#22a187"/>
<rect x="609.0" y="371.9" width="8.5" height="8.4" fill="#22a187"/>
<rect x="617.0" y="371.9" width="8.5" height="8.4" fill="#277f8e"/>
<rect x="625.0" y="371.9" width="8.5" height="8.4" fill="#2e6e8e"/>
<rect x="633.0" y="371.9" width="8.5" height="8.4" fill="#2e6e8e"/>
<rect x="641.0" y="371.9" width="8.5" height="8.4" fill="#2e6e8e"/>
<rect x="649.0" y="371.9" width="8.5" height="8.4" fill="#4abf6d"/>
<rect x="657.0" y="371.9" width="8.5" height="8.4" fill="#99d83d"/>
<rect x="665.0" y="371.9" width="8.5" height="8.4" fill="#4abf6d"/>
<rect x="673.0" y="371.9" width="8.5" height="8.4" fill="#2e6e8e"/>
<rect x="681.0" y="371.9" width="8.5" height="8.4" fill="#2e6e8e"/>
<rect x="689.0" y="371.9" width="8.5" height="8.4" fill="#22908c"/>
<rect x="697.0" y="371.9" width="8.5" height="8.4" fill="#30b17d"/>
<rect x="705.0" y="371.9" width="8.5" height="8.4" fill="#22a187"/>
<rect x="713.0" y="371.9" width="8.5" height="8.4" fill="#22908c"/>
<rect x="721.0" y="371.9" width="8.5" height="8.4" fill="#22a187"/>
<rect x="729.0" y="371.9" width="8.5" height="8.4" fill="#22908c"/>
<rect x="609.0" y="379.9" width="8.5" height="8.4" fill="#22a187"/>
<rect x="617.0" y="379.9" width="8.5" height="8.4" fill="#277f8e"/>
<rect x="625.0" y="379.9" width="8.5" height="8.4" fill="#2e6e8e"/>
<rect x="633.0" y="379.9" width="8.5" height="8.4" fill="#2e6e8e"/>
<rect x="641.0" y="379.9" width="8.5" height="8.4" fill="#277f8e"/>
<rect x="649.0" y="379.9" width="8.5" height="8.4" fill="#99d83d"/>
<rect x="657.0" y="379.9" width="8.5" height="8.4" fill="#6dcd59"/>
<rect x="665.0" y="379.9" width="8.5" height="8.4" fill="#4abf6d"/>
<rect x="673.0" y="379.9" width="8.5" height="8.4" fill="#2e6e8e"/>
<rect x="681.0" y="379.9" width="8.5" height="8.4" fill="#2e6e8e"/>
<rect x="689.0" y="379.9" width="8.5" height="8.4" fill="#22a187"/>
<rect x="697.0" y="379.9" width="8.5" height="8.4" fill="#6dcd59"/>
<rect x="705.0" y="379.9" width="8.5" height="8.4" fill="#22908c"/>
<rect x="713.0" y="379.9" width="8.5" height="8.4" fill="#22908c"/>
<rect x="721.0" y="379.9" width="8.5" height="8.4" fill="#22908c"/>
<rect x="729.0" y="379.9" width="8.5" height="8.4" fill="#22908c"/>
<rect x="609.0" y="387.8" width="8.5" height="8.4" fill="#22a187"/>
<rect x="617.0" y="387.8" width="8.5" height="8.4" fill="#277f8e"/>
<rect x="625.0" y="387.8" width="8.5" height="8.4" fill="#2e6e8e"/>
<rect x="633.0" y="387.8" width="8.5" height="8.4" fill="#2e6e8e"/>
<rect x="641.0" y="387.8" width="8.5" height="8.4" fill="#22908c"/>
<rect x="649.0" y="387.8" width="8.5" height="8.4" fill="#99d83d"/>
<rect x="657.0" y="387.8" width="8.5" height="8.4" fill="#6dcd59"/>
<rect x="665.0" y="387.8" width="8.5" height="8.4" fill="#4abf6d"/>
<rect x="673.0" y="387.8" width="8.5" height="8.4" fill="#2e6e8e"/>
<rect x="681.0" y="387.8" width="8.5" height="8.4" fill="#2e6e8e"/>
<rect x="689.0" y="387.8" width="8.5" height="8.4" fill="#30b17d"/>
<rect x="697.0" y="387.8" width="8.5" height="8.4" fill="#6dcd59"/>
<rect x="705.0" y="387.8" width="8.5" height="8.4" fill="#22908c"/>
<rect x="713.0" y="387.8" width="8.5" height="8.4" fill="#22908c"/>
<rect x="721.0" y="387.8" width="8.5" height="8.4" fill="#22908c"/>
<rect x="729.0" y="387.8" width="8.5" height="8.4" fill="#22908c"/>
<rect x="609.0" y="395.7" width="8.5" height="8.4" fill="#22a187"/>
<rect x="617.0" y="395.7" width="8.5" height="8.4" fill="#277f8e"/>
<rect x="625.0" y="395.7" width="8.5" height="8.4" fill="#2e6e8e"/>
<rect x="633.0" y="395.7" width="8.5" height="8.4" fill="#2e6e8e"/>
<rect x="641.0" y="395.7" width="8.5" height="8.4" fill="#22a187"/>
<rect x="649.0" y="395.7" width="8.5" height="8.4" fill="#99d83d"/>
<rect x="657.0" y="395.7" width="8.5" height="8.4" fill="#4abf6d"/>
<rect x="665.0" y="395.7" width="8.5" height="8.4" fill="#30b17d"/>
<rect x="673.0" y="395.7" width="8.5" height="8.4" fill="#2e6e8e"/>
<rect x="681.0" y="395.7" width="8.5" height="8.4" fill="#2e6e8e"/>
<rect x="689.0" y="395.7" width="8.5" height="8.4" fill="#4abf6d"/>
<rect x="697.0" y="395.7" width="8.5" height="8.4" fill="#4abf6d"/>
<rect x="705.0" y="395.7" width="8.5" height="8.4" fill="#22908c"/>
<rect x="713.0" y="395.7" width="8.5" height="8.4" fill="#22908c"/>
<rect x="721.0" y="395.7" width="8.5" height="8.4" fill="#22908c"/>
<rect x="729.0" y="395.7" width="8.5" height="8.4" fill="#22908c"/>
<rect x="609.0" y="403.7" width="8.5" height="18.4" fill="#22908c"/>
<rect x="617.0" y="403.7" width="8.5" height="18.4" fill="#277f8e"/>
<rect x="625.0" y="403.7" width="8.5" height="18.4" fill="#2e6e8e"/>
<rect x="633.0" y="403.7" width="8.5" height="18.4" fill="#2e6e8e"/>
<rect x="641.0" y="403.7" width="8.5" height="18.4" fill="#30b17d"/>
<rect x="649.0" y="403.7" width="8.5" height="18.4" fill="#bbdf2b"/>
<rect x="657.0" y="403.7" width="8.5" height="18.4" fill="#4abf6d"/>
<rect x="665.0" y="403.7" width="8.5" height="18.4" fill="#30b17d"/>
<rect x="673.0" y="403.7" width="8.5" height="18.4" fill="#2e6e8e"/>
<rect x="681.0" y="403.7" width="8.5" height="18.4" fill="#2e6e8e"/>
<rect x="689.0" y="403.7" width="8.5" height="18.4" fill="#99d83d"/>
<rect x="697.0" y="403.7" width="8.5" height="18.4" fill="#30b17d"/>
<rect x="705.0" y="403.7" width="8.5" height="18.4" fill="#22908c"/>
<rect x="713.0" y="403.7" width="8.5" height="18.4" fill="#22908c"/>
<rect x="721.0" y="403.7" width="8.5" height="18.4" fill="#22908c"/>
<rect x="729.0" y="403.7" width="8.5" height="18.4" fill="#22908c"/>
<rect x="737.0" y="330.2" width="8.5" height="18.4" fill="#22908c"/>
<rect x="745.0" y="330.2" width="8.5" height="18.4" fill="#22a187"/>
<rect x="753.0" y="330.2" width="8.5" height="18.4" fill="#22908c"/>
<rect x="761.0" y="330.2" width="20.5" height="18.4" fill="#277f8e"/>
<rect x="737.0" y="348.1" width="8.5" height="8.4" fill="#22908c"/>
<rect x="745.0" y="348.1" width="8.5" height="8.4" fill="#30b17d"/>
<rect x="753.0" y="348.1" width="8.5" height="8.4" fill="#22908c"/>
<rect x="761.0" y="348.1" width="20.5" height="8.4" fill="#277f8e"/>
<rect x="737.0" y="356.1" width="8.5" height="8.4" fill="#22908c"/>
<rect x="745.0" y="356.1" width="8.5" height="8.4" fill="#22a187"/>
<rect x="753.0" y="356.1" width="8.5" height="8.4" fill="#22908c"/>
<rect x="761.0" y="356.1" width="20.5" height="8.4" fill="#277f8e"/>
<rect x="737.0" y="364.0" width="8.5" height="8.4" fill="#22908c"/>
<rect x="745.0" y="364.0" width="8.5" height="8.4" fill="#30b17d"/>
<rect x="753.0" y="364.0" width="8.5" height="8.4" fill="#22908c"/>
<rect x="761.0" y="364.0" width="20.5" height="8.4" fill="#22908c"/>
<rect x="737.0" y="371.9" width="8.5" height="8.4" fill="#22a187"/>
<rect x="745.0" y="371.9" width="8.5" height="8.4" fill="#30b17d"/>
<rect x="753.0" y="371.9" width="8.5" height="8.4" fill="#22908c"/>
<rect x="761.0" y="371.9" width="20.5" height="8.4" fill="#22908c"/>
<rect x="737.0" y="379.9" width="8.5" height="8.4" fill="#4abf6d"/>
<rect x="745.0" y="379.9" width="8.5" height="8.4" fill="#30b17d"/>
<rect x="753.0" y="379.9" width="8.5" height="8.4" fill="#22908c"/>
<rect x="761.0" y="379.9" width="20.5" height="8.4" fill="#22908c"/>
<rect x="737.0" y="387.8" width="8.5" height="8.4" fill="#4abf6d"/>
<rect x="745.0" y="387.8" width="8.5" height="8.4" fill="#30b17d"/>
<rect x="753.0" y="387.8" width="8.5" height="8.4" fill="#22908c"/>
<rect x="761.0" y="387.8" width="20.5" height="8.4" fill="#22908c"/>
<rect x="737.0" y="395.7" width="8.5" height="8.4" fill="#4abf6d"/>
<rect x="745.0" y="395.7" width="8.5" height="8.4" fill="#30b17d"/>
<rect x="753.0" y="395.7" width="8.5" height="8.4" fill="#22908c"/>
<rect x="761.0" y="395.7" width="20.5" height="8.4" fill="#22908c"/>
<rect x="737.0" y="403.7" width="8.5" height="18.4" fill="#6dcd59"/>
<rect x="745.0" y="403.7" width="8.5" height="18.4" fill="#30b17d"/>
<rect x="753.0" y="403.7" width="8.5" height="18.4" fill="#22908c"/>
<rect x="761.0" y="403.7" width="20.5" height="18.4" fill="#22908c"/>
</g>
<g filter="url(#bl2)">
<rect x="353.0" y="338.2" width="2" height="76" fill="#3b2a78" opacity="0.10"/>
<rect x="356.5" y="338.2" width="1" height="76" fill="#a8e050" opacity="0.12"/>
<rect x="363.0" y="338.2" width="1" height="76" fill="#a8e050" opacity="0.09"/>
<rect x="365.0" y="338.2" width="2" height="76" fill="#a8e050" opacity="0.06"/>
<rect x="368.0" y="338.2" width="1" height="76" fill="#a8e050" opacity="0.05"/>
<rect x="378.0" y="338.2" width="1" height="76" fill="#3b2a78" opacity="0.15"/>
<rect x="389.0" y="338.2" width="1" height="76" fill="#a8e050" opacity="0.04"/>
<rect x="409.5" y="338.2" width="1.5" height="76" fill="#3b2a78" opacity="0.07"/>
<rect x="412.5" y="338.2" width="1.5" height="76" fill="#a8e050" opacity="0.10"/>
<rect x="417.0" y="338.2" width="1" height="76" fill="#3b2a78" opacity="0.13"/>
<rect x="420.0" y="338.2" width="1" height="76" fill="#a8e050" opacity="0.05"/>
<rect x="423.0" y="338.2" width="1" height="76" fill="#a8e050" opacity="0.10"/>
<rect x="424.5" y="338.2" width="1" height="76" fill="#3b2a78" opacity="0.12"/>
<rect x="426.0" y="338.2" width="2" height="76" fill="#3b2a78" opacity="0.08"/>
<rect x="428.5" y="338.2" width="2" height="76" fill="#a8e050" opacity="0.06"/>
<rect x="442.0" y="338.2" width="1" height="76" fill="#3b2a78" opacity="0.12"/>
<rect x="448.5" y="338.2" width="1" height="76" fill="#3b2a78" opacity="0.04"/>
<rect x="452.5" y="338.2" width="1" height="76" fill="#3b2a78" opacity="0.08"/>
<rect x="455.0" y="338.2" width="1" height="76" fill="#3b2a78" opacity="0.10"/>
<rect x="464.5" y="338.2" width="2" height="76" fill="#3b2a78" opacity="0.14"/>
<rect x="475.5" y="338.2" width="1.5" height="76" fill="#a8e050" opacity="0.03"/>
<rect x="477.5" y="338.2" width="1" height="76" fill="#3b2a78" opacity="0.14"/>
<rect x="480.5" y="338.2" width="1" height="76" fill="#3b2a78" opacity="0.09"/>
<rect x="485.5" y="338.2" width="2" height="76" fill="#a8e050" opacity="0.11"/>
<rect x="492.0" y="338.2" width="1" height="76" fill="#3b2a78" opacity="0.12"/>
<rect x="501.5" y="338.2" width="1.5" height="76" fill="#3b2a78" opacity="0.13"/>
<rect x="508.5" y="338.2" width="1" height="76" fill="#a8e050" opacity="0.09"/>
<rect x="511.5" y="338.2" width="1" height="76" fill="#3b2a78" opacity="0.08"/>
<rect x="513.0" y="338.2" width="1.5" height="76" fill="#3b2a78" opacity="0.05"/>
<rect x="519.5" y="338.2" width="1.5" height="76" fill="#3b2a78" opacity="0.06"/>
<rect x="524.0" y="338.2" width="2" height="76" fill="#a8e050" opacity="0.04"/>
<rect x="529.0" y="338.2" width="1.5" height="76" fill="#a8e050" opacity="0.11"/>
<rect x="531.0" y="338.2" width="1" height="76" fill="#3b2a78" opacity="0.08"/>
<rect x="536.0" y="338.2" width="1" height="76" fill="#a8e050" opacity="0.04"/>
<rect x="538.5" y="338.2" width="1" height="76" fill="#a8e050" opacity="0.06"/>
<rect x="542.5" y="338.2" width="1" height="76" fill="#a8e050" opacity="0.10"/>
<rect x="544.0" y="338.2" width="1" height="76" fill="#a8e050" opacity="0.09"/>
<rect x="549.5" y="338.2" width="1.5" height="76" fill="#a8e050" opacity="0.10"/>
<rect x="556.0" y="338.2" width="1" height="76" fill="#3b2a78" opacity="0.06"/>
<rect x="560.0" y="338.2" width="1" height="76" fill="#3b2a78" opacity="0.05"/>
<rect x="562.5" y="338.2" width="1.5" height="76" fill="#a8e050" opacity="0.09"/>
<rect x="570.5" y="338.2" width="1.5" height="76" fill="#3b2a78" opacity="0.07"/>
<rect x="572.5" y="338.2" width="2" height="76" fill="#a8e050" opacity="0.09"/>
<rect x="576.0" y="338.2" width="1.5" height="76" fill="#a8e050" opacity="0.06"/>
<rect x="596.0" y="338.2" width="1.5" height="76" fill="#3b2a78" opacity="0.13"/>
<rect x="598.5" y="338.2" width="1" height="76" fill="#3b2a78" opacity="0.13"/>
<rect x="610.5" y="338.2" width="1" height="76" fill="#a8e050" opacity="0.08"/>
<rect x="612.5" y="338.2" width="2" height="76" fill="#a8e050" opacity="0.09"/>
<rect x="622.5" y="338.2" width="1.5" height="76" fill="#3b2a78" opacity="0.06"/>
<rect x="634.0" y="338.2" width="1.5" height="76" fill="#3b2a78" opacity="0.05"/>
<rect x="638.0" y="338.2" width="1" height="76" fill="#3b2a78" opacity="0.12"/>
<rect x="642.0" y="338.2" width="1" height="76" fill="#a8e050" opacity="0.08"/>
<rect x="645.0" y="338.2" width="1" height="76" fill="#a8e050" opacity="0.06"/>
<rect x="657.5" y="338.2" width="1" height="76" fill="#3b2a78" opacity="0.14"/>
<rect x="663.0" y="338.2" width="1" height="76" fill="#3b2a78" opacity="0.09"/>
<rect x="673.0" y="338.2" width="1.5" height="76" fill="#3b2a78" opacity="0.11"/>
<rect x="677.5" y="338.2" width="1.5" height="76" fill="#3b2a78" opacity="0.08"/>
<rect x="683.5" y="338.2" width="1.5" height="76" fill="#3b2a78" opacity="0.09"/>
<rect x="688.5" y="338.2" width="1" height="76" fill="#a8e050" opacity="0.04"/>
<rect x="692.5" y="338.2" width="1.5" height="76" fill="#a8e050" opacity="0.06"/>
<rect x="700.0" y="338.2" width="2" height="76" fill="#3b2a78" opacity="0.11"/>
<rect x="710.0" y="338.2" width="1.5" height="76" fill="#a8e050" opacity="0.12"/>
<rect x="713.5" y="338.2" width="1" height="76" fill="#a8e050" opacity="0.09"/>
<rect x="722.5" y="338.2" width="1.5" height="76" fill="#3b2a78" opacity="0.12"/>
<rect x="725.0" y="338.2" width="1" height="76" fill="#3b2a78" opacity="0.05"/>
<rect x="727.0" y="338.2" width="1" height="76" fill="#a8e050" opacity="0.12"/>
<rect x="733.0" y="338.2" width="2" height="76" fill="#a8e050" opacity="0.06"/>
<rect x="736.0" y="338.2" width="1" height="76" fill="#a8e050" opacity="0.10"/>
<rect x="739.0" y="338.2" width="1.5" height="76" fill="#a8e050" opacity="0.06"/>
<rect x="747.0" y="338.2" width="2" height="76" fill="#3b2a78" opacity="0.13"/>
<rect x="751.0" y="338.2" width="1.5" height="76" fill="#3b2a78" opacity="0.09"/>
<rect x="753.0" y="338.2" width="1" height="76" fill="#3b2a78" opacity="0.05"/>
<rect x="755.5" y="338.2" width="1" height="76" fill="#3b2a78" opacity="0.05"/>
<rect x="759.5" y="338.2" width="2" height="76" fill="#a8e050" opacity="0.06"/>
<rect x="762.0" y="338.2" width="1" height="76" fill="#3b2a78" opacity="0.07"/>
</g>
<filter id="c2n1" x="0" y="0" width="100%" height="100%" color-interpolation-filters="sRGB"><feTurbulence type="fractalNoise" baseFrequency="0.22 0.02" numOctaves="2" seed="12"/><feColorMatrix type="matrix" values="0 0 0 0 0.47  0 0 0 0 0.82  0 0 0 0 0.36  1.4 0 0 0 -0.74"/></filter>
<rect x="353" y="340.2" width="410.4" height="71.4" filter="url(#c2n1)" opacity="0.35"/>
<filter id="c2n2" x="0" y="0" width="100%" height="100%" color-interpolation-filters="sRGB"><feTurbulence type="fractalNoise" baseFrequency="0.22 0.02" numOctaves="2" seed="12"/><feColorMatrix type="matrix" values="0 0 0 0 0.22  0 0 0 0 0.14  0 0 0 0 0.46  -1.4 0 0 0 0.68"/></filter>
<rect x="353" y="340.2" width="410.4" height="71.4" filter="url(#c2n2)" opacity="0.35"/>
<g>
<rect x="353" y="340.2" width="411" height="2" fill="#3a2c7a" opacity="0.65"/>
<rect x="641" y="340.2" width="1" height="72" fill="#3b2a78" opacity="0.6"/>
</g></g>
<text x="558.6" y="230" text-anchor="middle" font-family="DejaVu Sans, sans-serif" font-size="8.3" fill="#262626">mel spectrogram</text>
<text x="558.6" y="335.2" text-anchor="middle" font-family="DejaVu Sans, sans-serif" font-size="8.3" fill="#262626">mel spectrogram</text>
<text x="464.6" y="223" font-family="DejaVu Sans, sans-serif" font-size="8.3" fill="#262626">▯▯1.wav</text>
<text x="510.4" y="438.5" font-family="DejaVu Sans, sans-serif" font-weight="bold" font-size="20" fill="#b9b9b9" stroke="#fff" stroke-width="1.2" paint-order="stroke" textLength="250" lengthAdjust="spacingAndGlyphs">www.xunibaoku.com</text>
</svg>
</body></html>
